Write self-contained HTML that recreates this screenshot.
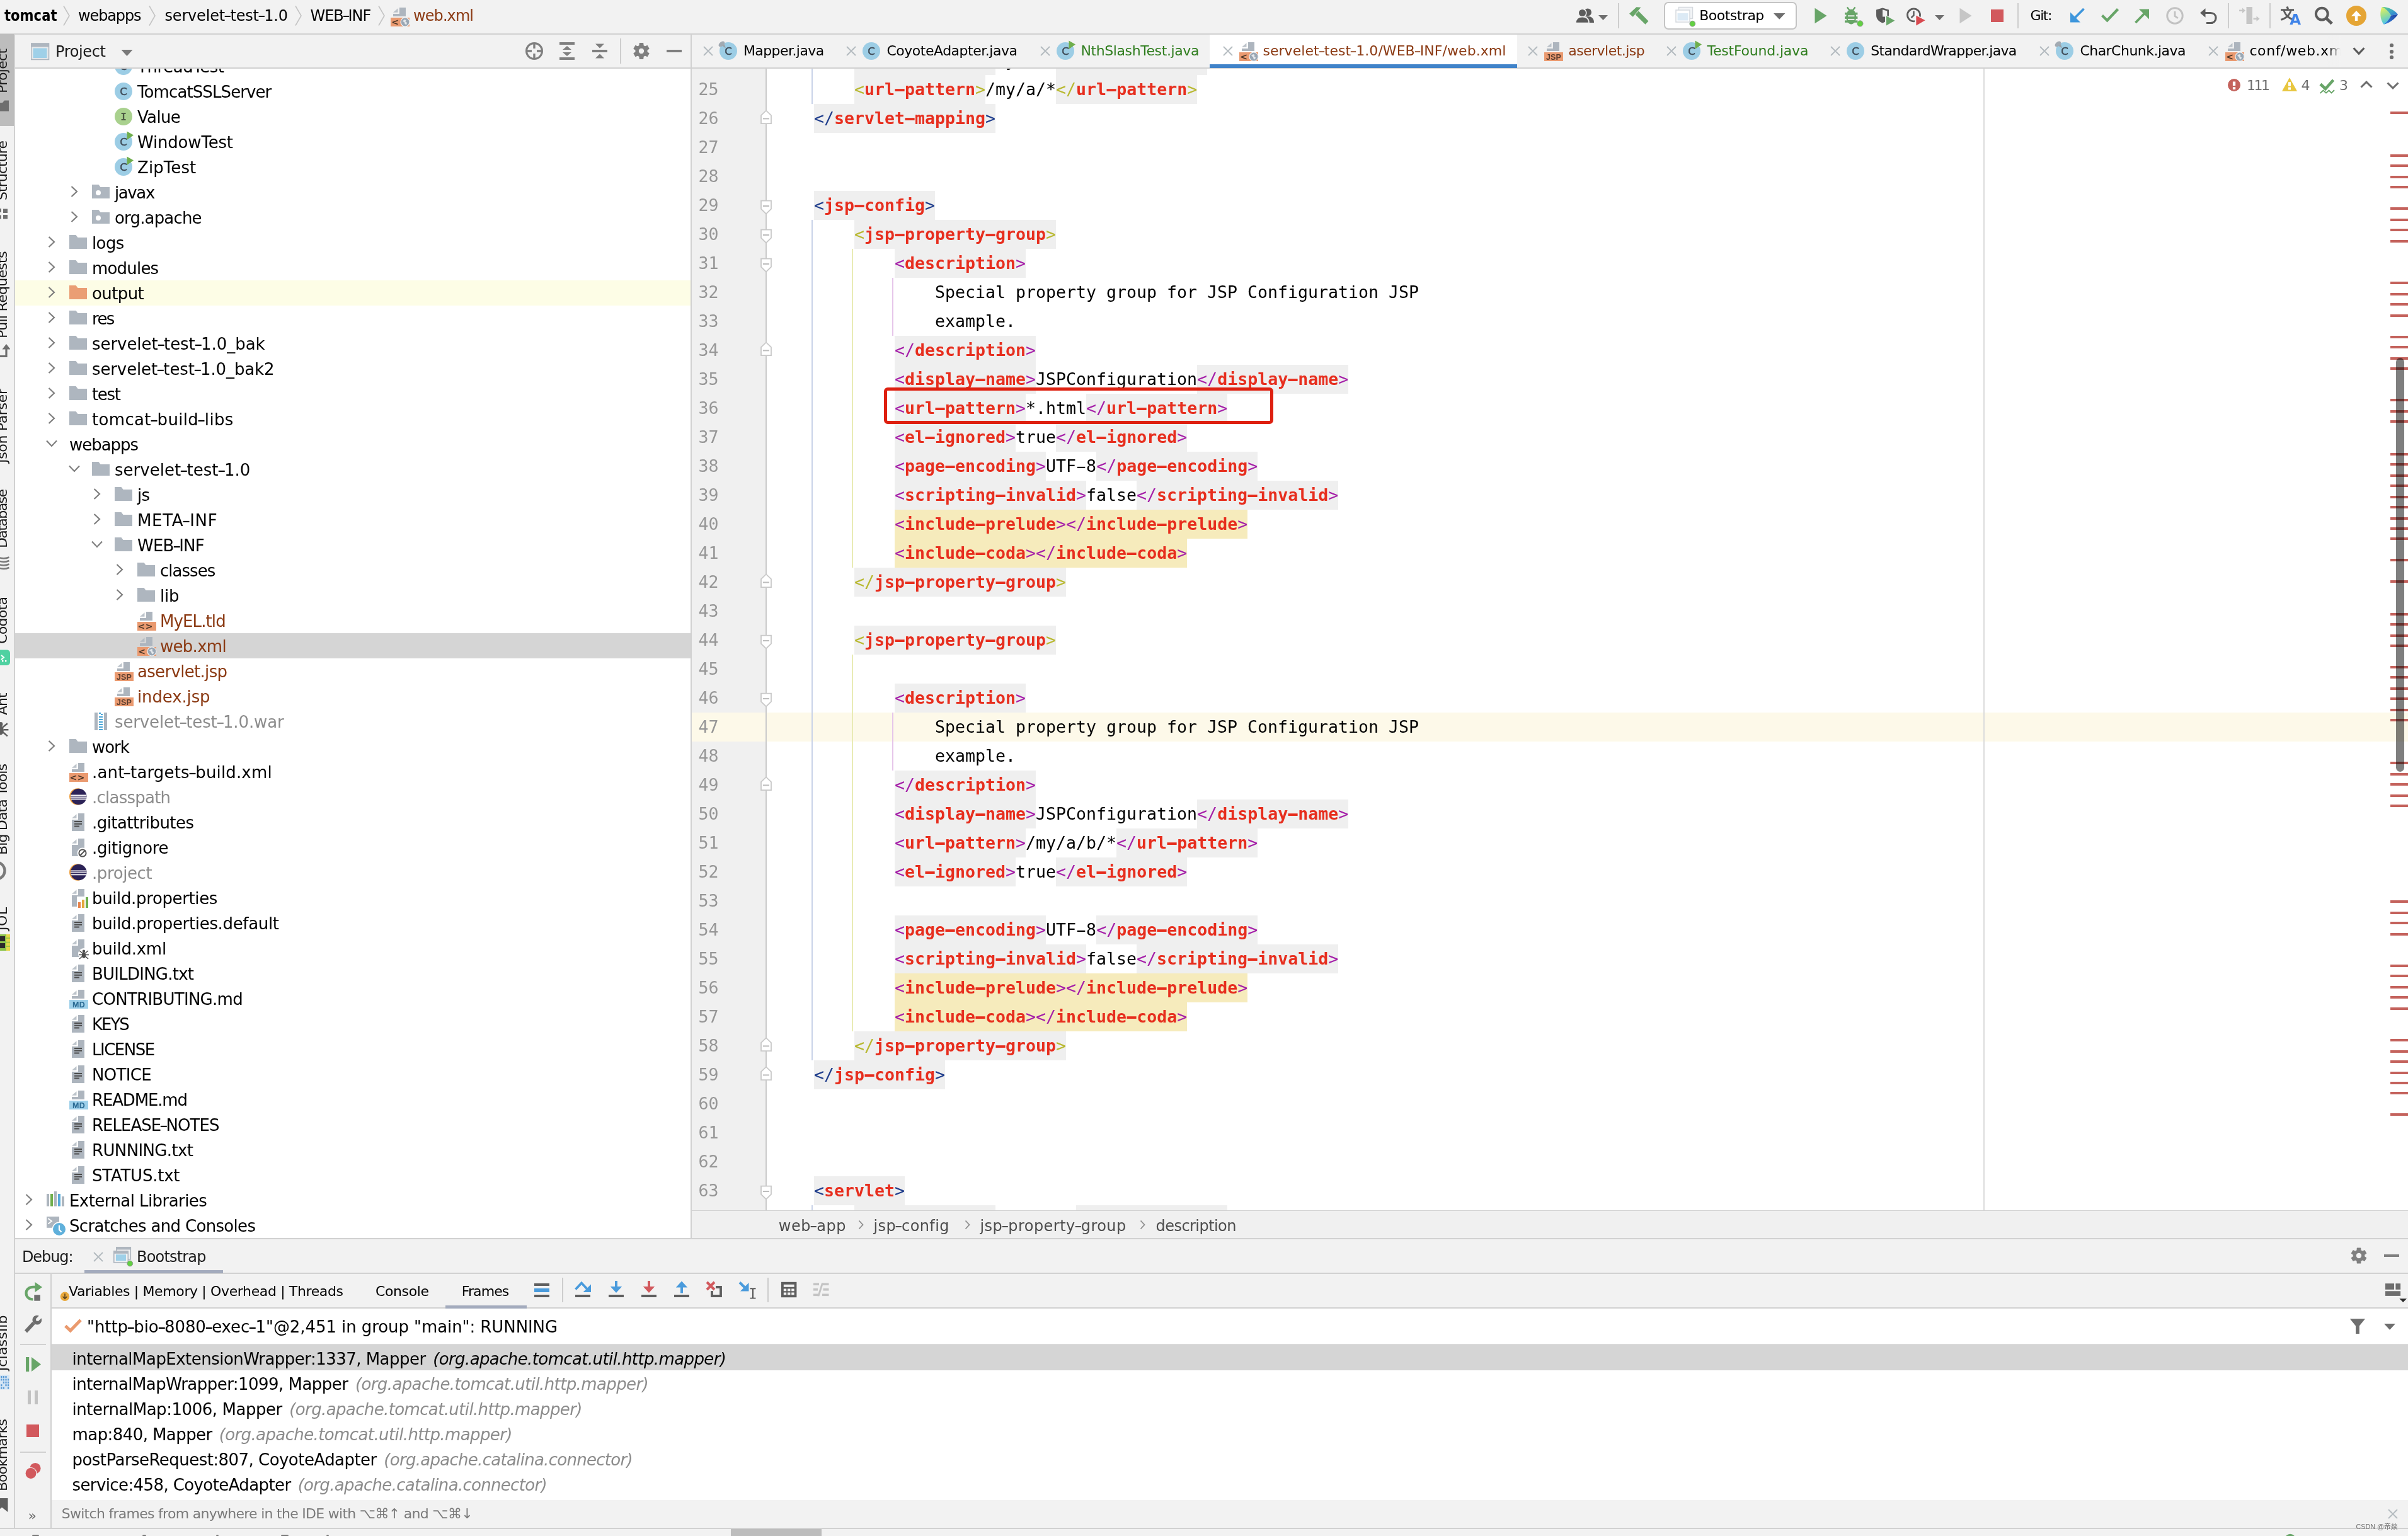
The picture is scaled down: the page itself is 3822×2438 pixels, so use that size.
<!DOCTYPE html>
<html><head><meta charset="utf-8"><title>tomcat – web.xml</title>
<style>
html,body{margin:0;padding:0;}
body{width:3822px;height:2438px;position:relative;overflow:hidden;background:#f2f2f2;}
#r{position:absolute;left:0;top:0;width:3822px;height:2438px;overflow:hidden;will-change:transform;}
#r div,#r svg,#r span.a{position:absolute;}
#r div{white-space:pre;}
.u{font-family:"DejaVu Sans","Liberation Sans",sans-serif;}
.m{font-family:"DejaVu Sans Mono","Liberation Mono",monospace;}
.cl{height:46px;line-height:46px;font-size:26.58px;color:#000;}
.cl span.cg,.cl span.ct{display:inline-block;height:46px;vertical-align:top;}
.cl b{color:#e72e1e;}
.u i{display:inline-block;font-style:normal;transform:scaleX(1.45);}
.cl i.h{display:inline-block;font-style:normal;transform:scaleX(1.85);}
</style></head><body><div id="r">
<div style="left:0px;top:0px;width:3822px;height:53px;background:#f2f2f2;"></div>
<div style="left:0px;top:53px;width:3822px;height:2px;background:#d1d1d1;"></div>
<div style="left:0px;top:55px;width:22px;height:2371px;background:#f2f2f2;"></div>
<div style="left:0px;top:54px;width:22px;height:146px;background:#bdbdbd;"></div>
<div style="left:22px;top:55px;width:2px;height:2371px;background:#d1d1d1;"></div>
<div style="left:24px;top:55px;width:1072px;height:53px;background:#f2f2f2;"></div>
<div style="left:24px;top:107px;width:1072px;height:2px;background:#d1d1d1;"></div>
<div style="left:24px;top:109px;width:1072px;height:1856px;background:#fff;"></div>
<div style="left:1096px;top:55px;width:2px;height:1911px;background:#d1d1d1;"></div>
<div style="left:1098px;top:55px;width:2724px;height:52px;background:#f2f2f2;"></div>
<div style="left:1098px;top:107px;width:2724px;height:2px;background:#d1d1d1;"></div>
<div style="left:1098px;top:109px;width:2724px;height:1812px;background:#fff;"></div>
<div style="left:1098px;top:1921px;width:2724px;height:1px;background:#d1d1d1;"></div>
<div style="left:1098px;top:1922px;width:2724px;height:43px;background:#f0f0f0;"></div>
<div style="left:24px;top:1965px;width:3798px;height:2px;background:#d1d1d1;"></div>
<div style="left:24px;top:1967px;width:3798px;height:53px;background:#f2f2f2;"></div>
<div style="left:24px;top:2020px;width:3798px;height:2px;background:#d1d1d1;"></div>
<div style="left:24px;top:2022px;width:3798px;height:53px;background:#f2f2f2;"></div>
<div style="left:82px;top:2075px;width:3740px;height:2px;background:#d1d1d1;"></div>
<div style="left:82px;top:2077px;width:3740px;height:304px;background:#fff;"></div>
<div style="left:80px;top:2022px;width:2px;height:403px;background:#d1d1d1;"></div>
<div style="left:24px;top:2075px;width:56px;height:350px;background:#f2f2f2;"></div>
<div style="left:82px;top:2381px;width:3740px;height:44px;background:#f2f2f2;"></div>
<div style="left:0px;top:2425px;width:3822px;height:2px;background:#d1d1d1;"></div>
<div style="left:0px;top:2427px;width:3822px;height:11px;background:#f2f2f2;"></div>
<div style="left:24px;top:109px;width:1072px;height:1856px;overflow:hidden">
<svg style="left:158px;top:-24px;" width="32" height="40" viewBox="0 0 32 40"><circle cx="14" cy="20" r="14" fill="#9ccde5"/><text x="14" y="25.6" text-anchor="middle" font-family="DejaVu Sans,Liberation Sans,sans-serif" font-size="16.5" fill="#3f4b57" stroke="#3f4b57" stroke-width=".5">C</text><path d="M19.5 3.5L30 9.5L19.5 17Z" fill="#6fae4c" stroke="#fff" stroke-width="0"/></svg>
<div class="u" style="left:194px;top:-23.40px;height:40px;line-height:40px;font-size:26px;color:#000;letter-spacing:-0.450px;">ThreadTest</div>
<svg style="left:158px;top:16px;" width="32" height="40" viewBox="0 0 32 40"><circle cx="14" cy="20" r="14" fill="#9ccde5"/><text x="14" y="25.6" text-anchor="middle" font-family="DejaVu Sans,Liberation Sans,sans-serif" font-size="16.5" fill="#3f4b57" stroke="#3f4b57" stroke-width=".5">C</text></svg>
<div class="u" style="left:194px;top:16.60px;height:40px;line-height:40px;font-size:26px;color:#000;letter-spacing:-0.898px;">TomcatSSLServer</div>
<svg style="left:158px;top:56px;" width="32" height="40" viewBox="0 0 32 40"><circle cx="14" cy="20" r="14" fill="#a9d18e"/><text x="14" y="25.8" text-anchor="middle" font-family="DejaVu Sans Mono,Liberation Mono,monospace" font-size="16" font-weight="bold" fill="#4c5a44">I</text></svg>
<div class="u" style="left:194px;top:56.60px;height:40px;line-height:40px;font-size:26px;color:#000;letter-spacing:-0.659px;">Value</div>
<svg style="left:158px;top:96px;" width="32" height="40" viewBox="0 0 32 40"><circle cx="14" cy="20" r="14" fill="#9ccde5"/><text x="14" y="25.6" text-anchor="middle" font-family="DejaVu Sans,Liberation Sans,sans-serif" font-size="16.5" fill="#3f4b57" stroke="#3f4b57" stroke-width=".5">C</text><path d="M19.5 3.5L30 9.5L19.5 17Z" fill="#6fae4c" stroke="#fff" stroke-width="0"/></svg>
<div class="u" style="left:194px;top:96.60px;height:40px;line-height:40px;font-size:26px;color:#000;letter-spacing:-0.189px;">WindowTest</div>
<svg style="left:158px;top:136px;" width="32" height="40" viewBox="0 0 32 40"><circle cx="14" cy="20" r="14" fill="#9ccde5"/><text x="14" y="25.6" text-anchor="middle" font-family="DejaVu Sans,Liberation Sans,sans-serif" font-size="16.5" fill="#3f4b57" stroke="#3f4b57" stroke-width=".5">C</text><path d="M19.5 3.5L30 9.5L19.5 17Z" fill="#6fae4c" stroke="#fff" stroke-width="0"/></svg>
<div class="u" style="left:194px;top:136.60px;height:40px;line-height:40px;font-size:26px;color:#000;letter-spacing:0.078px;">ZipTest</div>
<svg style="left:82.3px;top:183px;" width="24" height="24" viewBox="0 0 24 24"><path transform="translate(12 12) scale(1.0)" d="M-4.5 -8L4 0L-4.5 8" fill="none" stroke="#7f7f7f" stroke-width="2.2"/></svg>
<svg style="left:122px;top:176px;" width="28" height="40" viewBox="0 0 28 40"><path d="M0 8H10.5L13.5 12H28V30H0Z" fill="#aeb6bf"/><circle cx="10" cy="21" r="4" fill="#fff"/></svg>
<div class="u" style="left:158px;top:176.60px;height:40px;line-height:40px;font-size:26px;color:#000;letter-spacing:-1.398px;">javax</div>
<svg style="left:82.3px;top:223px;" width="24" height="24" viewBox="0 0 24 24"><path transform="translate(12 12) scale(1.0)" d="M-4.5 -8L4 0L-4.5 8" fill="none" stroke="#7f7f7f" stroke-width="2.2"/></svg>
<svg style="left:122px;top:216px;" width="28" height="40" viewBox="0 0 28 40"><path d="M0 8H10.5L13.5 12H28V30H0Z" fill="#aeb6bf"/><circle cx="10" cy="21" r="4" fill="#fff"/></svg>
<div class="u" style="left:158px;top:216.60px;height:40px;line-height:40px;font-size:26px;color:#000;letter-spacing:-0.836px;">org.apache</div>
<svg style="left:46.3px;top:263px;" width="24" height="24" viewBox="0 0 24 24"><path transform="translate(12 12) scale(1.0)" d="M-4.5 -8L4 0L-4.5 8" fill="none" stroke="#7f7f7f" stroke-width="2.2"/></svg>
<svg style="left:86px;top:256px;" width="28" height="40" viewBox="0 0 28 40"><path d="M0 8H10.5L13.5 12H28V30H0Z" fill="#aeb6bf"/></svg>
<div class="u" style="left:122px;top:256.60px;height:40px;line-height:40px;font-size:26px;color:#000;letter-spacing:-0.615px;">logs</div>
<svg style="left:46.3px;top:303px;" width="24" height="24" viewBox="0 0 24 24"><path transform="translate(12 12) scale(1.0)" d="M-4.5 -8L4 0L-4.5 8" fill="none" stroke="#7f7f7f" stroke-width="2.2"/></svg>
<svg style="left:86px;top:296px;" width="28" height="40" viewBox="0 0 28 40"><path d="M0 8H10.5L13.5 12H28V30H0Z" fill="#aeb6bf"/></svg>
<div class="u" style="left:122px;top:296.60px;height:40px;line-height:40px;font-size:26px;color:#000;letter-spacing:-0.807px;">modules</div>
<div style="left:0px;top:336px;width:1072px;height:40px;background:#fdfde6;"></div>
<svg style="left:46.3px;top:343px;" width="24" height="24" viewBox="0 0 24 24"><path transform="translate(12 12) scale(1.0)" d="M-4.5 -8L4 0L-4.5 8" fill="none" stroke="#7f7f7f" stroke-width="2.2"/></svg>
<svg style="left:86px;top:336px;" width="28" height="40" viewBox="0 0 28 40"><path d="M0 8H10.5L13.5 12H28V30H0Z" fill="#ea9e74"/></svg>
<div class="u" style="left:122px;top:336.60px;height:40px;line-height:40px;font-size:26px;color:#000;letter-spacing:-0.605px;">output</div>
<svg style="left:46.3px;top:383px;" width="24" height="24" viewBox="0 0 24 24"><path transform="translate(12 12) scale(1.0)" d="M-4.5 -8L4 0L-4.5 8" fill="none" stroke="#7f7f7f" stroke-width="2.2"/></svg>
<svg style="left:86px;top:376px;" width="28" height="40" viewBox="0 0 28 40"><path d="M0 8H10.5L13.5 12H28V30H0Z" fill="#aeb6bf"/></svg>
<div class="u" style="left:122px;top:376.60px;height:40px;line-height:40px;font-size:26px;color:#000;letter-spacing:-1.639px;">res</div>
<svg style="left:46.3px;top:423px;" width="24" height="24" viewBox="0 0 24 24"><path transform="translate(12 12) scale(1.0)" d="M-4.5 -8L4 0L-4.5 8" fill="none" stroke="#7f7f7f" stroke-width="2.2"/></svg>
<svg style="left:86px;top:416px;" width="28" height="40" viewBox="0 0 28 40"><path d="M0 8H10.5L13.5 12H28V30H0Z" fill="#aeb6bf"/></svg>
<div class="u" style="left:122px;top:416.60px;height:40px;line-height:40px;font-size:26px;color:#000;letter-spacing:-0.049px;">servelet<i>-</i>test<i>-</i>1.0_bak</div>
<svg style="left:46.3px;top:463px;" width="24" height="24" viewBox="0 0 24 24"><path transform="translate(12 12) scale(1.0)" d="M-4.5 -8L4 0L-4.5 8" fill="none" stroke="#7f7f7f" stroke-width="2.2"/></svg>
<svg style="left:86px;top:456px;" width="28" height="40" viewBox="0 0 28 40"><path d="M0 8H10.5L13.5 12H28V30H0Z" fill="#aeb6bf"/></svg>
<div class="u" style="left:122px;top:456.60px;height:40px;line-height:40px;font-size:26px;color:#000;letter-spacing:-0.123px;">servelet<i>-</i>test<i>-</i>1.0_bak2</div>
<svg style="left:46.3px;top:503px;" width="24" height="24" viewBox="0 0 24 24"><path transform="translate(12 12) scale(1.0)" d="M-4.5 -8L4 0L-4.5 8" fill="none" stroke="#7f7f7f" stroke-width="2.2"/></svg>
<svg style="left:86px;top:496px;" width="28" height="40" viewBox="0 0 28 40"><path d="M0 8H10.5L13.5 12H28V30H0Z" fill="#aeb6bf"/></svg>
<div class="u" style="left:122px;top:496.60px;height:40px;line-height:40px;font-size:26px;color:#000;letter-spacing:-1.358px;">test</div>
<svg style="left:46.3px;top:543px;" width="24" height="24" viewBox="0 0 24 24"><path transform="translate(12 12) scale(1.0)" d="M-4.5 -8L4 0L-4.5 8" fill="none" stroke="#7f7f7f" stroke-width="2.2"/></svg>
<svg style="left:86px;top:536px;" width="28" height="40" viewBox="0 0 28 40"><path d="M0 8H10.5L13.5 12H28V30H0Z" fill="#aeb6bf"/></svg>
<div class="u" style="left:122px;top:536.60px;height:40px;line-height:40px;font-size:26px;color:#000;letter-spacing:0.328px;">tomcat<i>-</i>build<i>-</i>libs</div>
<svg style="left:46.3px;top:583px;" width="24" height="24" viewBox="0 0 24 24"><path transform="translate(12 12) scale(1.0)" d="M-8 -4.5L0 4L8 -4.5" fill="none" stroke="#7f7f7f" stroke-width="2.2"/></svg>
<div class="u" style="left:86px;top:576.60px;height:40px;line-height:40px;font-size:26px;color:#000;letter-spacing:-1.020px;">webapps</div>
<svg style="left:82.3px;top:623px;" width="24" height="24" viewBox="0 0 24 24"><path transform="translate(12 12) scale(1.0)" d="M-8 -4.5L0 4L8 -4.5" fill="none" stroke="#7f7f7f" stroke-width="2.2"/></svg>
<svg style="left:122px;top:616px;" width="28" height="40" viewBox="0 0 28 40"><path d="M0 8H10.5L13.5 12H28V30H0Z" fill="#aeb6bf"/></svg>
<div class="u" style="left:158px;top:616.60px;height:40px;line-height:40px;font-size:26px;color:#000;letter-spacing:0.014px;">servelet<i>-</i>test<i>-</i>1.0</div>
<svg style="left:118.30000000000001px;top:663px;" width="24" height="24" viewBox="0 0 24 24"><path transform="translate(12 12) scale(1.0)" d="M-4.5 -8L4 0L-4.5 8" fill="none" stroke="#7f7f7f" stroke-width="2.2"/></svg>
<svg style="left:158px;top:656px;" width="28" height="40" viewBox="0 0 28 40"><path d="M0 8H10.5L13.5 12H28V30H0Z" fill="#aeb6bf"/></svg>
<div class="u" style="left:194px;top:656.60px;height:40px;line-height:40px;font-size:26px;color:#000;letter-spacing:-0.832px;">js</div>
<svg style="left:118.30000000000001px;top:703px;" width="24" height="24" viewBox="0 0 24 24"><path transform="translate(12 12) scale(1.0)" d="M-4.5 -8L4 0L-4.5 8" fill="none" stroke="#7f7f7f" stroke-width="2.2"/></svg>
<svg style="left:158px;top:696px;" width="28" height="40" viewBox="0 0 28 40"><path d="M0 8H10.5L13.5 12H28V30H0Z" fill="#aeb6bf"/></svg>
<div class="u" style="left:194px;top:696.60px;height:40px;line-height:40px;font-size:26px;color:#000;letter-spacing:0.672px;">META<i>-</i>INF</div>
<svg style="left:118.30000000000001px;top:743px;" width="24" height="24" viewBox="0 0 24 24"><path transform="translate(12 12) scale(1.0)" d="M-8 -4.5L0 4L8 -4.5" fill="none" stroke="#7f7f7f" stroke-width="2.2"/></svg>
<svg style="left:158px;top:736px;" width="28" height="40" viewBox="0 0 28 40"><path d="M0 8H10.5L13.5 12H28V30H0Z" fill="#aeb6bf"/></svg>
<div class="u" style="left:194px;top:736.60px;height:40px;line-height:40px;font-size:26px;color:#000;letter-spacing:-0.797px;">WEB<i>-</i>INF</div>
<svg style="left:154.3px;top:783px;" width="24" height="24" viewBox="0 0 24 24"><path transform="translate(12 12) scale(1.0)" d="M-4.5 -8L4 0L-4.5 8" fill="none" stroke="#7f7f7f" stroke-width="2.2"/></svg>
<svg style="left:194px;top:776px;" width="28" height="40" viewBox="0 0 28 40"><path d="M0 8H10.5L13.5 12H28V30H0Z" fill="#aeb6bf"/></svg>
<div class="u" style="left:230px;top:776.60px;height:40px;line-height:40px;font-size:26px;color:#000;letter-spacing:-0.982px;">classes</div>
<svg style="left:154.3px;top:823px;" width="24" height="24" viewBox="0 0 24 24"><path transform="translate(12 12) scale(1.0)" d="M-4.5 -8L4 0L-4.5 8" fill="none" stroke="#7f7f7f" stroke-width="2.2"/></svg>
<svg style="left:194px;top:816px;" width="28" height="40" viewBox="0 0 28 40"><path d="M0 8H10.5L13.5 12H28V30H0Z" fill="#aeb6bf"/></svg>
<div class="u" style="left:230px;top:816.60px;height:40px;line-height:40px;font-size:26px;color:#000;letter-spacing:-0.270px;">lib</div>
<svg style="left:194px;top:856px;" width="32" height="40" viewBox="0 0 32 40"><path d="M4 13.7L11.5 7.3V13.7Z" fill="#adb5be" opacity=".8"/><path d="M13.9 6H24V20H4V16H13.9Z" fill="#adb5be"/><rect x="0" y="22" width="30" height="14" fill="#ea9a70"/><text x="12.8" y="33.8" text-anchor="middle" font-family="DejaVu Sans,Liberation Sans,sans-serif" font-size="14" font-weight="bold" letter-spacing="0.6" fill="#4a3526">&lt;&gt;</text></svg>
<div class="u" style="left:230px;top:856.60px;height:40px;line-height:40px;font-size:26px;color:#8b3a13;letter-spacing:-0.894px;">MyEL.tld</div>
<div style="left:0px;top:896px;width:1072px;height:40px;background:#d5d5d5;"></div>
<svg style="left:194px;top:896px;" width="32" height="40" viewBox="0 0 32 40"><path d="M4 13.7L11.5 7.3V13.7Z" fill="#adb5be" opacity=".8"/><path d="M13.9 6H24V20H4V16H13.9Z" fill="#adb5be"/><rect x="0" y="22" width="30" height="14" fill="#ea9a70"/><text x="7" y="33.8" text-anchor="middle" font-family="DejaVu Sans,Liberation Sans,sans-serif" font-size="14" font-weight="bold" fill="#4a3526">&lt;</text><circle cx="23" cy="29" r="7.6" fill="#eef0f2"/><circle cx="23" cy="29" r="6.4" fill="#9aa7b4"/><path d="M19 27.5l3-2.5 2.5 1-1 2.5 2.5 1.5-1 3.5-2.5-1.5-.5-2.5z" fill="#e4e8ec"/></svg>
<div class="u" style="left:230px;top:896.60px;height:40px;line-height:40px;font-size:26px;color:#8b3a13;letter-spacing:-0.720px;">web.xml</div>
<svg style="left:158px;top:936px;" width="32" height="40" viewBox="0 0 32 40"><path d="M4 13.7L11.5 7.3V13.7Z" fill="#adb5be" opacity=".8"/><path d="M13.9 6H24V20H4V16H13.9Z" fill="#adb5be"/><rect x="0" y="22" width="30" height="14" fill="#ea9a70"/><text x="15" y="33.6" text-anchor="middle" font-family="Liberation Sans,DejaVu Sans,sans-serif" font-size="12.5" font-weight="bold" letter-spacing="0.2" fill="#5a3d2e">JSP</text></svg>
<div class="u" style="left:194px;top:936.60px;height:40px;line-height:40px;font-size:26px;color:#8b3a13;letter-spacing:-0.680px;">aservlet.jsp</div>
<svg style="left:158px;top:976px;" width="32" height="40" viewBox="0 0 32 40"><path d="M4 13.7L11.5 7.3V13.7Z" fill="#adb5be" opacity=".8"/><path d="M13.9 6H24V20H4V16H13.9Z" fill="#adb5be"/><rect x="0" y="22" width="30" height="14" fill="#ea9a70"/><text x="15" y="33.6" text-anchor="middle" font-family="Liberation Sans,DejaVu Sans,sans-serif" font-size="12.5" font-weight="bold" letter-spacing="0.2" fill="#5a3d2e">JSP</text></svg>
<div class="u" style="left:194px;top:976.60px;height:40px;line-height:40px;font-size:26px;color:#8b3a13;letter-spacing:-0.132px;">index.jsp</div>
<svg style="left:122px;top:1016px;" width="30" height="40" viewBox="0 0 30 40"><rect x="4" y="6" width="5" height="28" fill="#adb5be"/><rect x="19" y="6" width="5" height="28" fill="#adb5be"/><path d="M11 6h3v2h3v2h-3v2h3v2h-3v2h3v2h-3v2h3v2h-3v2h3v2h-3v2h3v2h-3v2h3v2h-6v-2h3v-2h-3v-2h3v-2h-3v-2h3v-2h-3v-2h3v-2h-3v-2h3v-2h-3v-2h3V8h-3z" fill="#49a6d8"/></svg>
<div class="u" style="left:158px;top:1016.60px;height:40px;line-height:40px;font-size:26px;color:#8c8c8c;letter-spacing:-0.131px;">servelet<i>-</i>test<i>-</i>1.0.war</div>
<svg style="left:46.3px;top:1063px;" width="24" height="24" viewBox="0 0 24 24"><path transform="translate(12 12) scale(1.0)" d="M-4.5 -8L4 0L-4.5 8" fill="none" stroke="#7f7f7f" stroke-width="2.2"/></svg>
<svg style="left:86px;top:1056px;" width="28" height="40" viewBox="0 0 28 40"><path d="M0 8H10.5L13.5 12H28V30H0Z" fill="#aeb6bf"/></svg>
<div class="u" style="left:122px;top:1056.60px;height:40px;line-height:40px;font-size:26px;color:#000;letter-spacing:-1.041px;">work</div>
<svg style="left:86px;top:1096px;" width="32" height="40" viewBox="0 0 32 40"><path d="M4 13.7L11.5 7.3V13.7Z" fill="#adb5be" opacity=".8"/><path d="M13.9 6H24V20H4V16H13.9Z" fill="#adb5be"/><rect x="0" y="22" width="30" height="14" fill="#ea9a70"/><text x="12.8" y="33.8" text-anchor="middle" font-family="DejaVu Sans,Liberation Sans,sans-serif" font-size="14" font-weight="bold" letter-spacing="0.6" fill="#4a3526">&lt;&gt;</text></svg>
<div class="u" style="left:122px;top:1096.60px;height:40px;line-height:40px;font-size:26px;color:#000;letter-spacing:0.152px;">.ant<i>-</i>targets<i>-</i>build.xml</div>
<svg style="left:86px;top:1136px;" width="30" height="40" viewBox="0 0 30 40"><circle cx="13.2" cy="19.5" r="13.2" fill="#f0a03c"/><circle cx="14.8" cy="19.5" r="12.8" fill="#2c2357"/><path d="M2.3 16.6h25v1.6h-25zM2 19.6h25.6v1.5H2zM2.6 22.6h24.4v1.6H2.6z" fill="#fff"/></svg>
<div class="u" style="left:122px;top:1136.60px;height:40px;line-height:40px;font-size:26px;color:#8c8c8c;letter-spacing:-0.760px;">.classpath</div>
<svg style="left:86px;top:1176px;" width="30" height="40" viewBox="0 0 30 40"><path d="M4 13.7L11.5 7.3V13.7Z" fill="#adb5be" opacity=".8"/><path d="M13.9 6H24V34H4V16H13.9Z" fill="#adb5be"/><path d="M8 18h12v2H8zM8 21.8h12v2H8zM8 25.6h8v2H8z" fill="#4d4d4d"/></svg>
<div class="u" style="left:122px;top:1176.60px;height:40px;line-height:40px;font-size:26px;color:#000;letter-spacing:-0.550px;">.gitattributes</div>
<svg style="left:86px;top:1216px;" width="32" height="40" viewBox="0 0 32 40"><path d="M4 13.7L11.5 7.3V13.7Z" fill="#adb5be" opacity=".8"/><path d="M13.9 6H24V34H4V16H13.9Z" fill="#adb5be"/><circle cx="21" cy="29" r="8.4" fill="#fff"/><circle cx="21" cy="29" r="5.6" fill="none" stroke="#555" stroke-width="2"/><path d="M17.2 32.8L24.8 25.2" stroke="#555" stroke-width="2"/></svg>
<div class="u" style="left:122px;top:1216.60px;height:40px;line-height:40px;font-size:26px;color:#000;letter-spacing:-0.311px;">.gitignore</div>
<svg style="left:86px;top:1256px;" width="30" height="40" viewBox="0 0 30 40"><circle cx="13.2" cy="19.5" r="13.2" fill="#f0a03c"/><circle cx="14.8" cy="19.5" r="12.8" fill="#2c2357"/><path d="M2.3 16.6h25v1.6h-25zM2 19.6h25.6v1.5H2zM2.6 22.6h24.4v1.6H2.6z" fill="#fff"/></svg>
<div class="u" style="left:122px;top:1256.60px;height:40px;line-height:40px;font-size:26px;color:#8c8c8c;letter-spacing:-0.401px;">.project</div>
<svg style="left:86px;top:1296px;" width="32" height="40" viewBox="0 0 32 40"><path d="M4 13.7L11.5 7.3V13.7Z" fill="#adb5be" opacity=".8"/><path d="M13.9 6H24V34H4V16H13.9Z" fill="#adb5be"/><rect x="12" y="18" width="20" height="18" fill="#fff"/><rect x="14" y="27" width="4" height="9" fill="#e8834a"/><rect x="20" y="23" width="4" height="13" fill="#e4a83c"/><rect x="26" y="19" width="4" height="17" fill="#6fae4c"/></svg>
<div class="u" style="left:122px;top:1296.60px;height:40px;line-height:40px;font-size:26px;color:#000;letter-spacing:-0.367px;">build.properties</div>
<svg style="left:86px;top:1336px;" width="30" height="40" viewBox="0 0 30 40"><path d="M4 13.7L11.5 7.3V13.7Z" fill="#adb5be" opacity=".8"/><path d="M13.9 6H24V34H4V16H13.9Z" fill="#adb5be"/><path d="M8 18h12v2H8zM8 21.8h12v2H8zM8 25.6h8v2H8z" fill="#4d4d4d"/></svg>
<div class="u" style="left:122px;top:1336.60px;height:40px;line-height:40px;font-size:26px;color:#000;letter-spacing:-0.330px;">build.properties.default</div>
<svg style="left:86px;top:1376px;" width="34" height="42" viewBox="0 0 34 42"><path d="M4 13.7L11.5 7.3V13.7Z" fill="#adb5be" opacity=".8"/><path d="M13.9 6H24V34H4V16H13.9Z" fill="#adb5be"/><circle cx="23" cy="29" r="9" fill="#fff"/><g transform="translate(23 29) scale(1.0)" fill="#4d4d4d" stroke="#4d4d4d"><ellipse cx="0" cy="-4.2" rx="2.2" ry="2.2" stroke="none"/><ellipse cx="0" cy="2.2" rx="3.1" ry="4.6" stroke="none"/><path d="M-2 -1L-7 -5M2 -1L7 -5M-3 1.5H-8M3 1.5H8M-2.5 4L-7 8M2.5 4L7 8" stroke-width="1.6" fill="none"/></g></svg>
<div class="u" style="left:122px;top:1376.60px;height:40px;line-height:40px;font-size:26px;color:#000;letter-spacing:-0.253px;">build.xml</div>
<svg style="left:86px;top:1416px;" width="30" height="40" viewBox="0 0 30 40"><path d="M4 13.7L11.5 7.3V13.7Z" fill="#adb5be" opacity=".8"/><path d="M13.9 6H24V34H4V16H13.9Z" fill="#adb5be"/><path d="M8 18h12v2H8zM8 21.8h12v2H8zM8 25.6h8v2H8z" fill="#4d4d4d"/></svg>
<div class="u" style="left:122px;top:1416.60px;height:40px;line-height:40px;font-size:26px;color:#000;letter-spacing:-0.762px;">BUILDING.txt</div>
<svg style="left:86px;top:1456px;" width="32" height="40" viewBox="0 0 32 40"><path d="M4 13.7L11.5 7.3V13.7Z" fill="#adb5be" opacity=".8"/><path d="M13.9 6H24V20H4V16H13.9Z" fill="#adb5be"/><rect x="0" y="22" width="30" height="14" fill="#9ed0ea"/><text x="15" y="33.6" text-anchor="middle" font-family="Liberation Sans,DejaVu Sans,sans-serif" font-size="12.5" font-weight="bold" letter-spacing="0.2" fill="#2a6a93">MD</text></svg>
<div class="u" style="left:122px;top:1456.60px;height:40px;line-height:40px;font-size:26px;color:#000;letter-spacing:-0.721px;">CONTRIBUTING.md</div>
<svg style="left:86px;top:1496px;" width="30" height="40" viewBox="0 0 30 40"><path d="M4 13.7L11.5 7.3V13.7Z" fill="#adb5be" opacity=".8"/><path d="M13.9 6H24V34H4V16H13.9Z" fill="#adb5be"/><path d="M8 18h12v2H8zM8 21.8h12v2H8zM8 25.6h8v2H8z" fill="#4d4d4d"/></svg>
<div class="u" style="left:122px;top:1496.60px;height:40px;line-height:40px;font-size:26px;color:#000;letter-spacing:-2.015px;">KEYS</div>
<svg style="left:86px;top:1536px;" width="30" height="40" viewBox="0 0 30 40"><path d="M4 13.7L11.5 7.3V13.7Z" fill="#adb5be" opacity=".8"/><path d="M13.9 6H24V34H4V16H13.9Z" fill="#adb5be"/><path d="M8 18h12v2H8zM8 21.8h12v2H8zM8 25.6h8v2H8z" fill="#4d4d4d"/></svg>
<div class="u" style="left:122px;top:1536.60px;height:40px;line-height:40px;font-size:26px;color:#000;letter-spacing:-1.491px;">LICENSE</div>
<svg style="left:86px;top:1576px;" width="30" height="40" viewBox="0 0 30 40"><path d="M4 13.7L11.5 7.3V13.7Z" fill="#adb5be" opacity=".8"/><path d="M13.9 6H24V34H4V16H13.9Z" fill="#adb5be"/><path d="M8 18h12v2H8zM8 21.8h12v2H8zM8 25.6h8v2H8z" fill="#4d4d4d"/></svg>
<div class="u" style="left:122px;top:1576.60px;height:40px;line-height:40px;font-size:26px;color:#000;letter-spacing:-0.673px;">NOTICE</div>
<svg style="left:86px;top:1616px;" width="32" height="40" viewBox="0 0 32 40"><path d="M4 13.7L11.5 7.3V13.7Z" fill="#adb5be" opacity=".8"/><path d="M13.9 6H24V20H4V16H13.9Z" fill="#adb5be"/><rect x="0" y="22" width="30" height="14" fill="#9ed0ea"/><text x="15" y="33.6" text-anchor="middle" font-family="Liberation Sans,DejaVu Sans,sans-serif" font-size="12.5" font-weight="bold" letter-spacing="0.2" fill="#2a6a93">MD</text></svg>
<div class="u" style="left:122px;top:1616.60px;height:40px;line-height:40px;font-size:26px;color:#000;letter-spacing:-1.155px;">README.md</div>
<svg style="left:86px;top:1656px;" width="30" height="40" viewBox="0 0 30 40"><path d="M4 13.7L11.5 7.3V13.7Z" fill="#adb5be" opacity=".8"/><path d="M13.9 6H24V34H4V16H13.9Z" fill="#adb5be"/><path d="M8 18h12v2H8zM8 21.8h12v2H8zM8 25.6h8v2H8z" fill="#4d4d4d"/></svg>
<div class="u" style="left:122px;top:1656.60px;height:40px;line-height:40px;font-size:26px;color:#000;letter-spacing:-0.989px;">RELEASE<i>-</i>NOTES</div>
<svg style="left:86px;top:1696px;" width="30" height="40" viewBox="0 0 30 40"><path d="M4 13.7L11.5 7.3V13.7Z" fill="#adb5be" opacity=".8"/><path d="M13.9 6H24V34H4V16H13.9Z" fill="#adb5be"/><path d="M8 18h12v2H8zM8 21.8h12v2H8zM8 25.6h8v2H8z" fill="#4d4d4d"/></svg>
<div class="u" style="left:122px;top:1696.60px;height:40px;line-height:40px;font-size:26px;color:#000;letter-spacing:-0.634px;">RUNNING.txt</div>
<svg style="left:86px;top:1736px;" width="30" height="40" viewBox="0 0 30 40"><path d="M4 13.7L11.5 7.3V13.7Z" fill="#adb5be" opacity=".8"/><path d="M13.9 6H24V34H4V16H13.9Z" fill="#adb5be"/><path d="M8 18h12v2H8zM8 21.8h12v2H8zM8 25.6h8v2H8z" fill="#4d4d4d"/></svg>
<div class="u" style="left:122px;top:1736.60px;height:40px;line-height:40px;font-size:26px;color:#000;letter-spacing:-0.226px;">STATUS.txt</div>
<svg style="left:10.3px;top:1783px;" width="24" height="24" viewBox="0 0 24 24"><path transform="translate(12 12) scale(1.0)" d="M-4.5 -8L4 0L-4.5 8" fill="none" stroke="#7f7f7f" stroke-width="2.2"/></svg>
<svg style="left:50px;top:1776px;" width="30" height="40" viewBox="0 0 30 40"><rect x="0" y="10" width="4" height="19.6" fill="#adb5be"/><rect x="6" y="10" width="4" height="19.6" fill="#6fae4c"/><rect x="12" y="6" width="4" height="23.6" fill="#adb5be"/><rect x="18" y="10" width="4" height="19.6" fill="#57abd9"/><rect x="24" y="14" width="4" height="15.6" fill="#adb5be"/></svg>
<div class="u" style="left:86px;top:1776.60px;height:40px;line-height:40px;font-size:26px;color:#000;letter-spacing:-0.568px;">External Libraries</div>
<svg style="left:10.3px;top:1823px;" width="24" height="24" viewBox="0 0 24 24"><path transform="translate(12 12) scale(1.0)" d="M-4.5 -8L4 0L-4.5 8" fill="none" stroke="#7f7f7f" stroke-width="2.2"/></svg>
<svg style="left:50px;top:1816px;" width="34" height="40" viewBox="0 0 34 40"><path d="M0 6H20V23.8H0Z" fill="#adb5be"/><path d="M2.3 9L8 13.3L2.3 17.6" stroke="#fff" stroke-width="1.8" fill="none"/><circle cx="20" cy="26" r="11.4" fill="#fff"/><circle cx="20" cy="26" r="10" fill="#5fb0db"/><path d="M20 20V27L23.5 30.5" stroke="#fff" stroke-width="2.2" fill="none"/></svg>
<div class="u" style="left:86px;top:1816.60px;height:40px;line-height:40px;font-size:26px;color:#000;letter-spacing:-0.674px;">Scratches and Consoles</div>
</div>
<div class="u" style="left:6.6px;top:5.20px;height:40px;line-height:40px;font-size:24px;color:#000;font-weight:bold;transform-origin:0 50%;transform:scaleX(0.8801);">tomcat</div>
<svg style="left:100px;top:8px;" width="12" height="34" viewBox="0 0 12 34"><path d="M1 1.5L10 17L1 32.5" fill="none" stroke="#c4c4c4" stroke-width="1.6"/></svg>
<div class="u" style="left:124px;top:5.20px;height:40px;line-height:40px;font-size:24px;color:#000;letter-spacing:-1.133px;">webapps</div>
<svg style="left:236px;top:8px;" width="12" height="34" viewBox="0 0 12 34"><path d="M1 1.5L10 17L1 32.5" fill="none" stroke="#c4c4c4" stroke-width="1.6"/></svg>
<div class="u" style="left:261.5px;top:5.20px;height:40px;line-height:40px;font-size:24px;color:#000;letter-spacing:-0.188px;">servelet<i>-</i>test<i>-</i>1.0</div>
<svg style="left:468px;top:8px;" width="12" height="34" viewBox="0 0 12 34"><path d="M1 1.5L10 17L1 32.5" fill="none" stroke="#c4c4c4" stroke-width="1.6"/></svg>
<div class="u" style="left:492.4px;top:5.20px;height:40px;line-height:40px;font-size:24px;color:#000;letter-spacing:-0.979px;">WEB<i>-</i>INF</div>
<svg style="left:600px;top:8px;" width="12" height="34" viewBox="0 0 12 34"><path d="M1 1.5L10 17L1 32.5" fill="none" stroke="#c4c4c4" stroke-width="1.6"/></svg>
<svg style="left:620px;top:5.5px;" width="32" height="40" viewBox="0 0 32 40"><path d="M4 13.7L11.5 7.3V13.7Z" fill="#adb5be" opacity=".8"/><path d="M13.9 6H24V20H4V16H13.9Z" fill="#adb5be"/><rect x="0" y="22" width="30" height="14" fill="#ea9a70"/><text x="7" y="33.8" text-anchor="middle" font-family="DejaVu Sans,Liberation Sans,sans-serif" font-size="14" font-weight="bold" fill="#4a3526">&lt;</text><circle cx="23" cy="29" r="7.6" fill="#eef0f2"/><circle cx="23" cy="29" r="6.4" fill="#9aa7b4"/><path d="M19 27.5l3-2.5 2.5 1-1 2.5 2.5 1.5-1 3.5-2.5-1.5-.5-2.5z" fill="#e4e8ec"/></svg>
<div class="u" style="left:656px;top:5.20px;height:40px;line-height:40px;font-size:24px;color:#8b3a13;letter-spacing:-0.917px;">web.xml</div>
<svg style="left:49px;top:68px;" width="30" height="28" viewBox="0 0 30 28"><rect x="0.5" y="1" width="28" height="25.5" fill="#e8eaec" stroke="#aeb6bf" stroke-width="1.6"/><rect x="0" y="0.5" width="29" height="6" fill="#aeb6bf"/><rect x="3.5" y="8.5" width="22" height="15.5" fill="#9fd0e8"/></svg>
<div class="u" style="left:88px;top:62.30px;height:40px;line-height:40px;font-size:24px;color:#1a1a1a;letter-spacing:-0.354px;">Project</div>
<svg style="left:192px;top:78px;" width="20" height="12" viewBox="0 0 20 12"><path d="M0.5 1H18.5L9.5 11Z" fill="#7a7a7a"/></svg>
<svg style="left:832px;top:65px;" width="32" height="32" viewBox="0 0 32 32"><circle cx="16" cy="16" r="12.4" fill="none" stroke="#7f7f7f" stroke-width="3.2"/><path d="M16 4v8M16 20v8M4 16h8M20 16h8" stroke="#7f7f7f" stroke-width="3.4"/></svg>
<svg style="left:888px;top:66px;" width="24" height="30" viewBox="0 0 24 30"><path d="M0 1h24v4H0zM0 25h24v4H0zM12 7l7 6H5zM12 23l7-6H5z" fill="#7f7f7f"/></svg>
<svg style="left:940px;top:66px;" width="24" height="30" viewBox="0 0 24 30"><path d="M0 13h24v4H0zM12 10.5l7-7H5zM12 19.5l7 7H5z" fill="#7f7f7f"/></svg>
<div style="left:984px;top:61px;width:2px;height:40px;background:#cdcdcd;"></div>
<svg style="left:1002px;top:65px;" width="32" height="32" viewBox="0 0 32 32"><path d="M12.97 7.45L13.28 3.70L18.72 3.70L19.03 7.45L21.89 9.10L25.29 7.49L28.02 12.21L24.92 14.35L24.92 17.65L28.02 19.79L25.29 24.51L21.89 22.90L19.03 24.55L18.72 28.30L13.28 28.30L12.97 24.55L10.11 22.90L6.71 24.51L3.98 19.79L7.08 17.65L7.08 14.35L3.98 12.21L6.71 7.49L10.11 9.10ZM20.8 16A4.8 4.8 0 1 0 11.2 16A4.8 4.8 0 1 0 20.8 16Z" fill="#7f7f7f" fill-rule="evenodd" stroke="#7f7f7f" stroke-width="1.2" stroke-linejoin="round"/></svg>
<div style="left:1058px;top:79px;width:24px;height:4px;background:#7f7f7f;"></div>
<div style="left:1920px;top:55px;width:488px;height:52px;background:#fff;"></div>
<div style="left:1920px;top:102px;width:488px;height:6px;background:#4083c9;"></div>
<svg style="left:1113.5px;top:71px;" width="20" height="20" viewBox="0 0 20 20"><path d="M3 3L17 17M17 3L3 17" stroke="#b3babf" stroke-width="1.8" fill="none"/></svg>
<svg style="left:1141.5px;top:61px;" width="32" height="40" viewBox="0 0 32 40"><circle cx="14" cy="20" r="14" fill="#9ccde5"/><text x="14" y="25.6" text-anchor="middle" font-family="DejaVu Sans,Liberation Sans,sans-serif" font-size="16.5" fill="#3f4b57" stroke="#3f4b57" stroke-width=".5">C</text></svg>
<svg style="left:1137.5px;top:61px;" width="22" height="22" viewBox="0 0 22 22"><path d="M8 11.5L14 15.8L11.8 9Z" fill="#9aa3ab"/><ellipse cx="7.4" cy="8.9" rx="5.6" ry="3.4" transform="rotate(-38 7.4 8.9)" fill="#a2aab2"/></svg>
<div class="u" style="left:1179.9px;top:61.30px;height:40px;line-height:40px;font-size:22px;color:#000;letter-spacing:-0.566px;">Mapper.java</div>
<svg style="left:1341px;top:71px;" width="20" height="20" viewBox="0 0 20 20"><path d="M3 3L17 17M17 3L3 17" stroke="#b3babf" stroke-width="1.8" fill="none"/></svg>
<svg style="left:1369px;top:61px;" width="32" height="40" viewBox="0 0 32 40"><circle cx="14" cy="20" r="14" fill="#9ccde5"/><text x="14" y="25.6" text-anchor="middle" font-family="DejaVu Sans,Liberation Sans,sans-serif" font-size="16.5" fill="#3f4b57" stroke="#3f4b57" stroke-width=".5">C</text></svg>
<div class="u" style="left:1407.4px;top:61.30px;height:40px;line-height:40px;font-size:22px;color:#000;letter-spacing:-0.482px;">CoyoteAdapter.java</div>
<svg style="left:1649px;top:71px;" width="20" height="20" viewBox="0 0 20 20"><path d="M3 3L17 17M17 3L3 17" stroke="#b3babf" stroke-width="1.8" fill="none"/></svg>
<svg style="left:1677px;top:61px;" width="32" height="40" viewBox="0 0 32 40"><circle cx="14" cy="20" r="14" fill="#9ccde5"/><text x="14" y="25.6" text-anchor="middle" font-family="DejaVu Sans,Liberation Sans,sans-serif" font-size="16.5" fill="#3f4b57" stroke="#3f4b57" stroke-width=".5">C</text><path d="M19.5 3.5L30 9.5L19.5 17Z" fill="#6fae4c" stroke="#fff" stroke-width="0"/></svg>
<div class="u" style="left:1715.4px;top:61.30px;height:40px;line-height:40px;font-size:22px;color:#2f7d1e;letter-spacing:-0.400px;">NthSlashTest.java</div>
<svg style="left:1938.5px;top:71px;" width="20" height="20" viewBox="0 0 20 20"><path d="M3 3L17 17M17 3L3 17" stroke="#b3babf" stroke-width="1.8" fill="none"/></svg>
<svg style="left:1966.5px;top:61px;" width="32" height="40" viewBox="0 0 32 40"><path d="M4 13.7L11.5 7.3V13.7Z" fill="#adb5be" opacity=".8"/><path d="M13.9 6H24V20H4V16H13.9Z" fill="#adb5be"/><rect x="0" y="22" width="30" height="14" fill="#ea9a70"/><text x="7" y="33.8" text-anchor="middle" font-family="DejaVu Sans,Liberation Sans,sans-serif" font-size="14" font-weight="bold" fill="#4a3526">&lt;</text><circle cx="23" cy="29" r="7.6" fill="#eef0f2"/><circle cx="23" cy="29" r="6.4" fill="#9aa7b4"/><path d="M19 27.5l3-2.5 2.5 1-1 2.5 2.5 1.5-1 3.5-2.5-1.5-.5-2.5z" fill="#e4e8ec"/></svg>
<div class="u" style="left:2004.4px;top:61.30px;height:40px;line-height:40px;font-size:22px;color:#8b3a13;letter-spacing:0.058px;">servelet<i>-</i>test<i>-</i>1.0/WEB<i>-</i>INF/web.xml</div>
<svg style="left:2423.3px;top:71px;" width="20" height="20" viewBox="0 0 20 20"><path d="M3 3L17 17M17 3L3 17" stroke="#b3babf" stroke-width="1.8" fill="none"/></svg>
<svg style="left:2451.3px;top:61px;" width="32" height="40" viewBox="0 0 32 40"><path d="M4 13.7L11.5 7.3V13.7Z" fill="#adb5be" opacity=".8"/><path d="M13.9 6H24V20H4V16H13.9Z" fill="#adb5be"/><rect x="0" y="22" width="30" height="14" fill="#ea9a70"/><text x="15" y="33.6" text-anchor="middle" font-family="Liberation Sans,DejaVu Sans,sans-serif" font-size="12.5" font-weight="bold" letter-spacing="0.2" fill="#5a3d2e">JSP</text></svg>
<div class="u" style="left:2489.2000000000003px;top:61.30px;height:40px;line-height:40px;font-size:22px;color:#8b3a13;letter-spacing:-0.524px;">aservlet.jsp</div>
<svg style="left:2643px;top:71px;" width="20" height="20" viewBox="0 0 20 20"><path d="M3 3L17 17M17 3L3 17" stroke="#b3babf" stroke-width="1.8" fill="none"/></svg>
<svg style="left:2671px;top:61px;" width="32" height="40" viewBox="0 0 32 40"><circle cx="14" cy="20" r="14" fill="#9ccde5"/><text x="14" y="25.6" text-anchor="middle" font-family="DejaVu Sans,Liberation Sans,sans-serif" font-size="16.5" fill="#3f4b57" stroke="#3f4b57" stroke-width=".5">C</text><path d="M19.5 3.5L30 9.5L19.5 17Z" fill="#6fae4c" stroke="#fff" stroke-width="0"/></svg>
<div class="u" style="left:2709.4px;top:61.30px;height:40px;line-height:40px;font-size:22px;color:#2f7d1e;letter-spacing:-0.200px;">TestFound.java</div>
<svg style="left:2902.9px;top:71px;" width="20" height="20" viewBox="0 0 20 20"><path d="M3 3L17 17M17 3L3 17" stroke="#b3babf" stroke-width="1.8" fill="none"/></svg>
<svg style="left:2930.9px;top:61px;" width="32" height="40" viewBox="0 0 32 40"><circle cx="14" cy="20" r="14" fill="#9ccde5"/><text x="14" y="25.6" text-anchor="middle" font-family="DejaVu Sans,Liberation Sans,sans-serif" font-size="16.5" fill="#3f4b57" stroke="#3f4b57" stroke-width=".5">C</text></svg>
<div class="u" style="left:2969.3px;top:61.30px;height:40px;line-height:40px;font-size:22px;color:#000;letter-spacing:-0.683px;">StandardWrapper.java</div>
<svg style="left:3235px;top:71px;" width="20" height="20" viewBox="0 0 20 20"><path d="M3 3L17 17M17 3L3 17" stroke="#b3babf" stroke-width="1.8" fill="none"/></svg>
<svg style="left:3263px;top:61px;" width="32" height="40" viewBox="0 0 32 40"><circle cx="14" cy="20" r="14" fill="#9ccde5"/><text x="14" y="25.6" text-anchor="middle" font-family="DejaVu Sans,Liberation Sans,sans-serif" font-size="16.5" fill="#3f4b57" stroke="#3f4b57" stroke-width=".5">C</text></svg>
<svg style="left:3259px;top:61px;" width="22" height="22" viewBox="0 0 22 22"><path d="M8 11.5L14 15.8L11.8 9Z" fill="#9aa3ab"/><ellipse cx="7.4" cy="8.9" rx="5.6" ry="3.4" transform="rotate(-38 7.4 8.9)" fill="#a2aab2"/></svg>
<div class="u" style="left:3301.4px;top:61.30px;height:40px;line-height:40px;font-size:22px;color:#000;letter-spacing:-0.525px;">CharChunk.java</div>
<svg style="left:3503.4px;top:71px;" width="20" height="20" viewBox="0 0 20 20"><path d="M3 3L17 17M17 3L3 17" stroke="#b3babf" stroke-width="1.8" fill="none"/></svg>
<svg style="left:3531.9px;top:61px;" width="32" height="40" viewBox="0 0 32 40"><path d="M4 13.7L11.5 7.3V13.7Z" fill="#adb5be" opacity=".8"/><path d="M13.9 6H24V20H4V16H13.9Z" fill="#adb5be"/><rect x="0" y="22" width="30" height="14" fill="#ea9a70"/><text x="7" y="33.8" text-anchor="middle" font-family="DejaVu Sans,Liberation Sans,sans-serif" font-size="14" font-weight="bold" fill="#4a3526">&lt;</text><circle cx="23" cy="29" r="7.6" fill="#eef0f2"/><circle cx="23" cy="29" r="6.4" fill="#9aa7b4"/><path d="M19 27.5l3-2.5 2.5 1-1 2.5 2.5 1.5-1 3.5-2.5-1.5-.5-2.5z" fill="#e4e8ec"/></svg>
<div style="left:3570.4px;top:56px;width:146px;height:50px;overflow:hidden">
<div class="u" style="left:0px;top:5.30px;height:40px;line-height:40px;font-size:22px;color:#000;letter-spacing:0.618px;">conf/web.xml</div>
</div>
<div style="left:3694.4px;top:56px;width:22px;height:50px;background:linear-gradient(90deg,rgba(242,242,242,0),#f2f2f2 95%)"></div>
<svg style="left:3732px;top:69px;" width="24" height="24" viewBox="0 0 24 24"><path transform="translate(12 12) scale(1.05)" d="M-8 -4.5L0 4L8 -4.5" fill="none" stroke="#5a5a5a" stroke-width="3"/></svg>
<svg style="left:3790.5px;top:67.0px;" width="10" height="10" viewBox="0 0 10 10"><circle cx="5" cy="5" r="3.1" fill="#6e6e6e"/></svg>
<svg style="left:3790.5px;top:76.5px;" width="10" height="10" viewBox="0 0 10 10"><circle cx="5" cy="5" r="3.1" fill="#6e6e6e"/></svg>
<svg style="left:3790.5px;top:86.0px;" width="10" height="10" viewBox="0 0 10 10"><circle cx="5" cy="5" r="3.1" fill="#6e6e6e"/></svg>
<div style="left:1098px;top:109px;width:2724px;height:1812px;overflow:hidden">
<div style="left:0px;top:0px;width:117px;height:1812px;background:#f0f0f0;"></div>
<div style="left:0px;top:1022px;width:2724px;height:46px;background:#fdf9e9;"></div>
<div style="left:0px;top:1022px;width:117px;height:46px;background:#fdf9e9;"></div>
<div style="left:2050px;top:0px;width:2px;height:1812px;background:#dcdcdc;"></div>
<div style="left:117px;top:0px;width:2px;height:1812px;background:#cbcbcb;"></div>
<div style="left:190px;top:-36px;width:2px;height:92px;background:#c9d3e8;"></div>
<div style="left:190px;top:240px;width:2px;height:1334px;background:#c9d3e8;"></div>
<div style="left:190px;top:1804px;width:2px;height:46px;background:#c9d3e8;"></div>
<div style="left:254px;top:286px;width:2px;height:506px;background:#e9ebb5;"></div>
<div style="left:254px;top:930px;width:2px;height:598px;background:#e9ebb5;"></div>
<div style="left:318px;top:332px;width:2px;height:92px;background:#e6c6ea;"></div>
<div style="left:318px;top:1022px;width:2px;height:92px;background:#e6c6ea;"></div>
<div class="m" style="left:9px;top:-36px;width:33.5px;height:46px;line-height:46px;font-size:26.58px;color:#979797;text-align:right">24</div>
<div class="m cl" style="left:258.0px;top:-36px;"><span class="cg" style="background:#efefef"><span style="color:#b8b82f">&lt;</span><b>servlet<i class="h">-</i>name</b><span style="color:#b8b82f">&gt;</span></span><span class="ct">MyTest</span><span class="cg" style="background:#efefef"><span style="color:#b8b82f">&lt;/</span><b>servlet<i class="h">-</i>name</b><span style="color:#b8b82f">&gt;</span></span></div>
<div class="m" style="left:9px;top:10px;width:33.5px;height:46px;line-height:46px;font-size:26.58px;color:#979797;text-align:right">25</div>
<div class="m cl" style="left:258.0px;top:10px;"><span class="cg" style="background:#efefef"><span style="color:#b8b82f">&lt;</span><b>url<i class="h">-</i>pattern</b><span style="color:#b8b82f">&gt;</span></span><span class="ct">/my/a/*</span><span class="cg" style="background:#efefef"><span style="color:#b8b82f">&lt;/</span><b>url<i class="h">-</i>pattern</b><span style="color:#b8b82f">&gt;</span></span></div>
<div class="m" style="left:9px;top:56px;width:33.5px;height:46px;line-height:46px;font-size:26.58px;color:#979797;text-align:right">26</div>
<div class="m cl" style="left:194.0px;top:56px;"><span class="cg" style="background:#efefef"><span style="color:#1f3d8c">&lt;/</span><b>servlet<i class="h">-</i>mapping</b><span style="color:#1f3d8c">&gt;</span></span></div>
<div class="m" style="left:9px;top:102px;width:33.5px;height:46px;line-height:46px;font-size:26.58px;color:#979797;text-align:right">27</div>
<div class="m" style="left:9px;top:148px;width:33.5px;height:46px;line-height:46px;font-size:26.58px;color:#979797;text-align:right">28</div>
<div class="m" style="left:9px;top:194px;width:33.5px;height:46px;line-height:46px;font-size:26.58px;color:#979797;text-align:right">29</div>
<div class="m cl" style="left:194.0px;top:194px;"><span class="cg" style="background:#efefef"><span style="color:#1f3d8c">&lt;</span><b>jsp<i class="h">-</i>config</b><span style="color:#1f3d8c">&gt;</span></span></div>
<div class="m" style="left:9px;top:240px;width:33.5px;height:46px;line-height:46px;font-size:26.58px;color:#979797;text-align:right">30</div>
<div class="m cl" style="left:258.0px;top:240px;"><span class="cg" style="background:#efefef"><span style="color:#b8b82f">&lt;</span><b>jsp<i class="h">-</i>property<i class="h">-</i>group</b><span style="color:#b8b82f">&gt;</span></span></div>
<div class="m" style="left:9px;top:286px;width:33.5px;height:46px;line-height:46px;font-size:26.58px;color:#979797;text-align:right">31</div>
<div class="m cl" style="left:322.0px;top:286px;"><span class="cg" style="background:#efefef"><span style="color:#a51fa8">&lt;</span><b>description</b><span style="color:#a51fa8">&gt;</span></span></div>
<div class="m" style="left:9px;top:332px;width:33.5px;height:46px;line-height:46px;font-size:26.58px;color:#979797;text-align:right">32</div>
<div class="m cl" style="left:386.0px;top:332px;"><span class="ct">Special property group for JSP Configuration JSP</span></div>
<div class="m" style="left:9px;top:378px;width:33.5px;height:46px;line-height:46px;font-size:26.58px;color:#979797;text-align:right">33</div>
<div class="m cl" style="left:386.0px;top:378px;"><span class="ct">example.</span></div>
<div class="m" style="left:9px;top:424px;width:33.5px;height:46px;line-height:46px;font-size:26.58px;color:#979797;text-align:right">34</div>
<div class="m cl" style="left:322.0px;top:424px;"><span class="cg" style="background:#efefef"><span style="color:#a51fa8">&lt;/</span><b>description</b><span style="color:#a51fa8">&gt;</span></span></div>
<div class="m" style="left:9px;top:470px;width:33.5px;height:46px;line-height:46px;font-size:26.58px;color:#979797;text-align:right">35</div>
<div class="m cl" style="left:322.0px;top:470px;"><span class="cg" style="background:#efefef"><span style="color:#a51fa8">&lt;</span><b>display<i class="h">-</i>name</b><span style="color:#a51fa8">&gt;</span></span><span class="ct">JSPConfiguration</span><span class="cg" style="background:#efefef"><span style="color:#a51fa8">&lt;/</span><b>display<i class="h">-</i>name</b><span style="color:#a51fa8">&gt;</span></span></div>
<div class="m" style="left:9px;top:516px;width:33.5px;height:46px;line-height:46px;font-size:26.58px;color:#979797;text-align:right">36</div>
<div class="m cl" style="left:322.0px;top:516px;"><span class="cg" style="background:#efefef"><span style="color:#a51fa8">&lt;</span><b>url<i class="h">-</i>pattern</b><span style="color:#a51fa8">&gt;</span></span><span class="ct">*.html</span><span class="cg" style="background:#efefef"><span style="color:#a51fa8">&lt;/</span><b>url<i class="h">-</i>pattern</b><span style="color:#a51fa8">&gt;</span></span></div>
<div class="m" style="left:9px;top:562px;width:33.5px;height:46px;line-height:46px;font-size:26.58px;color:#979797;text-align:right">37</div>
<div class="m cl" style="left:322.0px;top:562px;"><span class="cg" style="background:#efefef"><span style="color:#a51fa8">&lt;</span><b>el<i class="h">-</i>ignored</b><span style="color:#a51fa8">&gt;</span></span><span class="ct">true</span><span class="cg" style="background:#efefef"><span style="color:#a51fa8">&lt;/</span><b>el<i class="h">-</i>ignored</b><span style="color:#a51fa8">&gt;</span></span></div>
<div class="m" style="left:9px;top:608px;width:33.5px;height:46px;line-height:46px;font-size:26.58px;color:#979797;text-align:right">38</div>
<div class="m cl" style="left:322.0px;top:608px;"><span class="cg" style="background:#efefef"><span style="color:#a51fa8">&lt;</span><b>page<i class="h">-</i>encoding</b><span style="color:#a51fa8">&gt;</span></span><span class="ct">UTF<i class="h">-</i>8</span><span class="cg" style="background:#efefef"><span style="color:#a51fa8">&lt;/</span><b>page<i class="h">-</i>encoding</b><span style="color:#a51fa8">&gt;</span></span></div>
<div class="m" style="left:9px;top:654px;width:33.5px;height:46px;line-height:46px;font-size:26.58px;color:#979797;text-align:right">39</div>
<div class="m cl" style="left:322.0px;top:654px;"><span class="cg" style="background:#efefef"><span style="color:#a51fa8">&lt;</span><b>scripting<i class="h">-</i>invalid</b><span style="color:#a51fa8">&gt;</span></span><span class="ct">false</span><span class="cg" style="background:#efefef"><span style="color:#a51fa8">&lt;/</span><b>scripting<i class="h">-</i>invalid</b><span style="color:#a51fa8">&gt;</span></span></div>
<div class="m" style="left:9px;top:700px;width:33.5px;height:46px;line-height:46px;font-size:26.58px;color:#979797;text-align:right">40</div>
<div class="m cl" style="left:322.0px;top:700px;"><span class="cg" style="background:#f6ebbc"><span style="color:#a51fa8">&lt;</span><b>include<i class="h">-</i>prelude</b><span style="color:#a51fa8">&gt;</span></span><span class="cg" style="background:#f6ebbc"><span style="color:#a51fa8">&lt;/</span><b>include<i class="h">-</i>prelude</b><span style="color:#a51fa8">&gt;</span></span></div>
<div class="m" style="left:9px;top:746px;width:33.5px;height:46px;line-height:46px;font-size:26.58px;color:#979797;text-align:right">41</div>
<div class="m cl" style="left:322.0px;top:746px;"><span class="cg" style="background:#f6ebbc"><span style="color:#a51fa8">&lt;</span><b>include<i class="h">-</i>coda</b><span style="color:#a51fa8">&gt;</span></span><span class="cg" style="background:#f6ebbc"><span style="color:#a51fa8">&lt;/</span><b>include<i class="h">-</i>coda</b><span style="color:#a51fa8">&gt;</span></span></div>
<div class="m" style="left:9px;top:792px;width:33.5px;height:46px;line-height:46px;font-size:26.58px;color:#979797;text-align:right">42</div>
<div class="m cl" style="left:258.0px;top:792px;"><span class="cg" style="background:#efefef"><span style="color:#b8b82f">&lt;/</span><b>jsp<i class="h">-</i>property<i class="h">-</i>group</b><span style="color:#b8b82f">&gt;</span></span></div>
<div class="m" style="left:9px;top:838px;width:33.5px;height:46px;line-height:46px;font-size:26.58px;color:#979797;text-align:right">43</div>
<div class="m" style="left:9px;top:884px;width:33.5px;height:46px;line-height:46px;font-size:26.58px;color:#979797;text-align:right">44</div>
<div class="m cl" style="left:258.0px;top:884px;"><span class="cg" style="background:#efefef"><span style="color:#b8b82f">&lt;</span><b>jsp<i class="h">-</i>property<i class="h">-</i>group</b><span style="color:#b8b82f">&gt;</span></span></div>
<div class="m" style="left:9px;top:930px;width:33.5px;height:46px;line-height:46px;font-size:26.58px;color:#979797;text-align:right">45</div>
<div class="m" style="left:9px;top:976px;width:33.5px;height:46px;line-height:46px;font-size:26.58px;color:#979797;text-align:right">46</div>
<div class="m cl" style="left:322.0px;top:976px;"><span class="cg" style="background:#efefef"><span style="color:#a51fa8">&lt;</span><b>description</b><span style="color:#a51fa8">&gt;</span></span></div>
<div class="m" style="left:9px;top:1022px;width:33.5px;height:46px;line-height:46px;font-size:26.58px;color:#979797;text-align:right">47</div>
<div class="m cl" style="left:386.0px;top:1022px;"><span class="ct">Special property group for JSP Configuration JSP</span></div>
<div class="m" style="left:9px;top:1068px;width:33.5px;height:46px;line-height:46px;font-size:26.58px;color:#979797;text-align:right">48</div>
<div class="m cl" style="left:386.0px;top:1068px;"><span class="ct">example.</span></div>
<div class="m" style="left:9px;top:1114px;width:33.5px;height:46px;line-height:46px;font-size:26.58px;color:#979797;text-align:right">49</div>
<div class="m cl" style="left:322.0px;top:1114px;"><span class="cg" style="background:#efefef"><span style="color:#a51fa8">&lt;/</span><b>description</b><span style="color:#a51fa8">&gt;</span></span></div>
<div class="m" style="left:9px;top:1160px;width:33.5px;height:46px;line-height:46px;font-size:26.58px;color:#979797;text-align:right">50</div>
<div class="m cl" style="left:322.0px;top:1160px;"><span class="cg" style="background:#efefef"><span style="color:#a51fa8">&lt;</span><b>display<i class="h">-</i>name</b><span style="color:#a51fa8">&gt;</span></span><span class="ct">JSPConfiguration</span><span class="cg" style="background:#efefef"><span style="color:#a51fa8">&lt;/</span><b>display<i class="h">-</i>name</b><span style="color:#a51fa8">&gt;</span></span></div>
<div class="m" style="left:9px;top:1206px;width:33.5px;height:46px;line-height:46px;font-size:26.58px;color:#979797;text-align:right">51</div>
<div class="m cl" style="left:322.0px;top:1206px;"><span class="cg" style="background:#efefef"><span style="color:#a51fa8">&lt;</span><b>url<i class="h">-</i>pattern</b><span style="color:#a51fa8">&gt;</span></span><span class="ct">/my/a/b/*</span><span class="cg" style="background:#efefef"><span style="color:#a51fa8">&lt;/</span><b>url<i class="h">-</i>pattern</b><span style="color:#a51fa8">&gt;</span></span></div>
<div class="m" style="left:9px;top:1252px;width:33.5px;height:46px;line-height:46px;font-size:26.58px;color:#979797;text-align:right">52</div>
<div class="m cl" style="left:322.0px;top:1252px;"><span class="cg" style="background:#efefef"><span style="color:#a51fa8">&lt;</span><b>el<i class="h">-</i>ignored</b><span style="color:#a51fa8">&gt;</span></span><span class="ct">true</span><span class="cg" style="background:#efefef"><span style="color:#a51fa8">&lt;/</span><b>el<i class="h">-</i>ignored</b><span style="color:#a51fa8">&gt;</span></span></div>
<div class="m" style="left:9px;top:1298px;width:33.5px;height:46px;line-height:46px;font-size:26.58px;color:#979797;text-align:right">53</div>
<div class="m" style="left:9px;top:1344px;width:33.5px;height:46px;line-height:46px;font-size:26.58px;color:#979797;text-align:right">54</div>
<div class="m cl" style="left:322.0px;top:1344px;"><span class="cg" style="background:#efefef"><span style="color:#a51fa8">&lt;</span><b>page<i class="h">-</i>encoding</b><span style="color:#a51fa8">&gt;</span></span><span class="ct">UTF<i class="h">-</i>8</span><span class="cg" style="background:#efefef"><span style="color:#a51fa8">&lt;/</span><b>page<i class="h">-</i>encoding</b><span style="color:#a51fa8">&gt;</span></span></div>
<div class="m" style="left:9px;top:1390px;width:33.5px;height:46px;line-height:46px;font-size:26.58px;color:#979797;text-align:right">55</div>
<div class="m cl" style="left:322.0px;top:1390px;"><span class="cg" style="background:#efefef"><span style="color:#a51fa8">&lt;</span><b>scripting<i class="h">-</i>invalid</b><span style="color:#a51fa8">&gt;</span></span><span class="ct">false</span><span class="cg" style="background:#efefef"><span style="color:#a51fa8">&lt;/</span><b>scripting<i class="h">-</i>invalid</b><span style="color:#a51fa8">&gt;</span></span></div>
<div class="m" style="left:9px;top:1436px;width:33.5px;height:46px;line-height:46px;font-size:26.58px;color:#979797;text-align:right">56</div>
<div class="m cl" style="left:322.0px;top:1436px;"><span class="cg" style="background:#f6ebbc"><span style="color:#a51fa8">&lt;</span><b>include<i class="h">-</i>prelude</b><span style="color:#a51fa8">&gt;</span></span><span class="cg" style="background:#f6ebbc"><span style="color:#a51fa8">&lt;/</span><b>include<i class="h">-</i>prelude</b><span style="color:#a51fa8">&gt;</span></span></div>
<div class="m" style="left:9px;top:1482px;width:33.5px;height:46px;line-height:46px;font-size:26.58px;color:#979797;text-align:right">57</div>
<div class="m cl" style="left:322.0px;top:1482px;"><span class="cg" style="background:#f6ebbc"><span style="color:#a51fa8">&lt;</span><b>include<i class="h">-</i>coda</b><span style="color:#a51fa8">&gt;</span></span><span class="cg" style="background:#f6ebbc"><span style="color:#a51fa8">&lt;/</span><b>include<i class="h">-</i>coda</b><span style="color:#a51fa8">&gt;</span></span></div>
<div class="m" style="left:9px;top:1528px;width:33.5px;height:46px;line-height:46px;font-size:26.58px;color:#979797;text-align:right">58</div>
<div class="m cl" style="left:258.0px;top:1528px;"><span class="cg" style="background:#efefef"><span style="color:#b8b82f">&lt;/</span><b>jsp<i class="h">-</i>property<i class="h">-</i>group</b><span style="color:#b8b82f">&gt;</span></span></div>
<div class="m" style="left:9px;top:1574px;width:33.5px;height:46px;line-height:46px;font-size:26.58px;color:#979797;text-align:right">59</div>
<div class="m cl" style="left:194.0px;top:1574px;"><span class="cg" style="background:#efefef"><span style="color:#1f3d8c">&lt;/</span><b>jsp<i class="h">-</i>config</b><span style="color:#1f3d8c">&gt;</span></span></div>
<div class="m" style="left:9px;top:1620px;width:33.5px;height:46px;line-height:46px;font-size:26.58px;color:#979797;text-align:right">60</div>
<div class="m" style="left:9px;top:1666px;width:33.5px;height:46px;line-height:46px;font-size:26.58px;color:#979797;text-align:right">61</div>
<div class="m" style="left:9px;top:1712px;width:33.5px;height:46px;line-height:46px;font-size:26.58px;color:#979797;text-align:right">62</div>
<div class="m" style="left:9px;top:1758px;width:33.5px;height:46px;line-height:46px;font-size:26.58px;color:#979797;text-align:right">63</div>
<div class="m cl" style="left:194.0px;top:1758px;"><span class="cg" style="background:#efefef"><span style="color:#1f3d8c">&lt;</span><b>servlet</b><span style="color:#1f3d8c">&gt;</span></span></div>
<div class="m" style="left:9px;top:1804px;width:33.5px;height:46px;line-height:46px;font-size:26.58px;color:#979797;text-align:right">64</div>
<div class="m cl" style="left:258.0px;top:1804px;"><span class="cg" style="background:#efefef"><span style="color:#b8b82f">&lt;</span><b>servlet<i class="h">-</i>name</b><span style="color:#b8b82f">&gt;</span></span><span class="ct">BServlet</span><span class="cg" style="background:#efefef"><span style="color:#b8b82f">&lt;/</span><b>servlet<i class="h">-</i>name</b><span style="color:#b8b82f">&gt;</span></span></div>
<svg style="left:107px;top:56px;" width="22" height="46" viewBox="0 0 22 46"><g transform="translate(11 0)"><path d="M-8 31.2H8V18.2L0 10.4L-8 18.2Z" fill="#fff" stroke="#c9c9c9" stroke-width="1.8"/><path d="M-5 23.4H5" stroke="#bdbdbd" stroke-width="2"/></g></svg>
<svg style="left:107px;top:194px;" width="22" height="46" viewBox="0 0 22 46"><g transform="translate(11 0)"><path d="M-8 15.6H8V28.6L0 36.4L-8 28.6Z" fill="#fff" stroke="#c9c9c9" stroke-width="1.8"/><path d="M-5 24H5" stroke="#bdbdbd" stroke-width="2"/></g></svg>
<svg style="left:107px;top:240px;" width="22" height="46" viewBox="0 0 22 46"><g transform="translate(11 0)"><path d="M-8 15.6H8V28.6L0 36.4L-8 28.6Z" fill="#fff" stroke="#c9c9c9" stroke-width="1.8"/><path d="M-5 24H5" stroke="#bdbdbd" stroke-width="2"/></g></svg>
<svg style="left:107px;top:286px;" width="22" height="46" viewBox="0 0 22 46"><g transform="translate(11 0)"><path d="M-8 15.6H8V28.6L0 36.4L-8 28.6Z" fill="#fff" stroke="#c9c9c9" stroke-width="1.8"/><path d="M-5 24H5" stroke="#bdbdbd" stroke-width="2"/></g></svg>
<svg style="left:107px;top:424px;" width="22" height="46" viewBox="0 0 22 46"><g transform="translate(11 0)"><path d="M-8 31.2H8V18.2L0 10.4L-8 18.2Z" fill="#fff" stroke="#c9c9c9" stroke-width="1.8"/><path d="M-5 23.4H5" stroke="#bdbdbd" stroke-width="2"/></g></svg>
<svg style="left:107px;top:792px;" width="22" height="46" viewBox="0 0 22 46"><g transform="translate(11 0)"><path d="M-8 31.2H8V18.2L0 10.4L-8 18.2Z" fill="#fff" stroke="#c9c9c9" stroke-width="1.8"/><path d="M-5 23.4H5" stroke="#bdbdbd" stroke-width="2"/></g></svg>
<svg style="left:107px;top:884px;" width="22" height="46" viewBox="0 0 22 46"><g transform="translate(11 0)"><path d="M-8 15.6H8V28.6L0 36.4L-8 28.6Z" fill="#fff" stroke="#c9c9c9" stroke-width="1.8"/><path d="M-5 24H5" stroke="#bdbdbd" stroke-width="2"/></g></svg>
<svg style="left:107px;top:976px;" width="22" height="46" viewBox="0 0 22 46"><g transform="translate(11 0)"><path d="M-8 15.6H8V28.6L0 36.4L-8 28.6Z" fill="#fff" stroke="#c9c9c9" stroke-width="1.8"/><path d="M-5 24H5" stroke="#bdbdbd" stroke-width="2"/></g></svg>
<svg style="left:107px;top:1114px;" width="22" height="46" viewBox="0 0 22 46"><g transform="translate(11 0)"><path d="M-8 31.2H8V18.2L0 10.4L-8 18.2Z" fill="#fff" stroke="#c9c9c9" stroke-width="1.8"/><path d="M-5 23.4H5" stroke="#bdbdbd" stroke-width="2"/></g></svg>
<svg style="left:107px;top:1528px;" width="22" height="46" viewBox="0 0 22 46"><g transform="translate(11 0)"><path d="M-8 31.2H8V18.2L0 10.4L-8 18.2Z" fill="#fff" stroke="#c9c9c9" stroke-width="1.8"/><path d="M-5 23.4H5" stroke="#bdbdbd" stroke-width="2"/></g></svg>
<svg style="left:107px;top:1574px;" width="22" height="46" viewBox="0 0 22 46"><g transform="translate(11 0)"><path d="M-8 31.2H8V18.2L0 10.4L-8 18.2Z" fill="#fff" stroke="#c9c9c9" stroke-width="1.8"/><path d="M-5 23.4H5" stroke="#bdbdbd" stroke-width="2"/></g></svg>
<svg style="left:107px;top:1758px;" width="22" height="46" viewBox="0 0 22 46"><g transform="translate(11 0)"><path d="M-8 15.6H8V28.6L0 36.4L-8 28.6Z" fill="#fff" stroke="#c9c9c9" stroke-width="1.8"/><path d="M-5 24H5" stroke="#bdbdbd" stroke-width="2"/></g></svg>
<div style="left:305px;top:506.29999999999995px;width:608px;height:47.3px;border:5.5px solid #de2010;border-radius:6px;box-sizing:content-box"></div>
</div>
<svg style="left:3535px;top:124px;" width="22" height="22" viewBox="0 0 22 22"><circle cx="11" cy="11" r="10" fill="#c4625c"/><path d="M8.9 5.4h4.3v6.6H8.9zM8.9 14.2h4.3v3.8H8.9z" fill="#fff"/></svg>
<div class="u" style="left:3566px;top:115.50px;height:40px;line-height:40px;font-size:22px;color:#6e6e6e;letter-spacing:-2.500px;">111</div>
<svg style="left:3621px;top:122px;" width="26" height="24" viewBox="0 0 26 24"><path d="M13 1.2L25 22.8H1Z" fill="#e8c63e"/><path d="M11 8.2h4v6.6h-4zM11 16.6h4v4h-4z" fill="#fff"/></svg>
<div class="u" style="left:3652.5px;top:115.50px;height:40px;line-height:40px;font-size:22px;color:#6e6e6e;letter-spacing:-0.450px;">4</div>
<svg style="left:3681px;top:124px;" width="26" height="26" viewBox="0 0 26 26"><path d="M2 9.5L10 17L22.5 3" fill="none" stroke="#68a568" stroke-width="4.6"/><path d="M1.5 24L6.5 19.5L11 23.5L15.5 19.5L19.5 23.5L24 19" fill="none" stroke="#68a568" stroke-width="1.8"/></svg>
<div class="u" style="left:3713px;top:115.50px;height:40px;line-height:40px;font-size:22px;color:#6e6e6e;letter-spacing:-0.450px;">3</div>
<svg style="left:3745px;top:127px;" width="22" height="14" viewBox="0 0 22 14"><path d="M2.5 11.5L11 3.2L19.5 11.5" fill="none" stroke="#6e6e6e" stroke-width="3"/></svg>
<svg style="left:3787px;top:129px;" width="22" height="14" viewBox="0 0 22 14"><path d="M2.5 2.5L11 10.8L19.5 2.5" fill="none" stroke="#6e6e6e" stroke-width="3"/></svg>
<div style="left:3794px;top:177px;width:28px;height:4px;background:#c4625c;"></div>
<div style="left:3794px;top:245px;width:28px;height:4px;background:#c4625c;"></div>
<div style="left:3794px;top:261px;width:28px;height:4px;background:#c4625c;"></div>
<div style="left:3794px;top:279px;width:28px;height:4px;background:#c4625c;"></div>
<div style="left:3794px;top:295px;width:28px;height:4px;background:#c4625c;"></div>
<div style="left:3794px;top:329px;width:28px;height:4px;background:#c4625c;"></div>
<div style="left:3794px;top:347px;width:28px;height:4px;background:#c4625c;"></div>
<div style="left:3794px;top:363px;width:28px;height:4px;background:#c4625c;"></div>
<div style="left:3794px;top:381px;width:28px;height:4px;background:#c4625c;"></div>
<div style="left:3794px;top:447px;width:28px;height:4px;background:#c4625c;"></div>
<div style="left:3794px;top:465px;width:28px;height:4px;background:#c4625c;"></div>
<div style="left:3794px;top:481px;width:28px;height:4px;background:#c4625c;"></div>
<div style="left:3794px;top:499px;width:28px;height:4px;background:#c4625c;"></div>
<div style="left:3794px;top:533px;width:28px;height:4px;background:#c4625c;"></div>
<div style="left:3794px;top:549px;width:28px;height:4px;background:#c4625c;"></div>
<div style="left:3794px;top:567px;width:28px;height:4px;background:#c4625c;"></div>
<div style="left:3794px;top:583px;width:28px;height:4px;background:#c4625c;"></div>
<div style="left:3794px;top:633px;width:28px;height:4px;background:#c4625c;"></div>
<div style="left:3794px;top:651px;width:28px;height:4px;background:#c4625c;"></div>
<div style="left:3794px;top:667px;width:28px;height:4px;background:#c4625c;"></div>
<div style="left:3794px;top:719px;width:28px;height:4px;background:#c4625c;"></div>
<div style="left:3794px;top:735px;width:28px;height:4px;background:#c4625c;"></div>
<div style="left:3794px;top:753px;width:28px;height:4px;background:#c4625c;"></div>
<div style="left:3794px;top:769px;width:28px;height:4px;background:#c4625c;"></div>
<div style="left:3794px;top:787px;width:28px;height:4px;background:#c4625c;"></div>
<div style="left:3794px;top:803px;width:28px;height:4px;background:#c4625c;"></div>
<div style="left:3794px;top:821px;width:28px;height:4px;background:#c4625c;"></div>
<div style="left:3794px;top:837px;width:28px;height:4px;background:#c4625c;"></div>
<div style="left:3794px;top:853px;width:28px;height:4px;background:#c4625c;"></div>
<div style="left:3794px;top:887px;width:28px;height:4px;background:#c4625c;"></div>
<div style="left:3794px;top:921px;width:28px;height:4px;background:#c4625c;"></div>
<div style="left:3794px;top:973px;width:28px;height:4px;background:#c4625c;"></div>
<div style="left:3794px;top:989px;width:28px;height:4px;background:#c4625c;"></div>
<div style="left:3794px;top:1007px;width:28px;height:4px;background:#c4625c;"></div>
<div style="left:3794px;top:1023px;width:28px;height:4px;background:#c4625c;"></div>
<div style="left:3794px;top:1057px;width:28px;height:4px;background:#c4625c;"></div>
<div style="left:3794px;top:1073px;width:28px;height:4px;background:#c4625c;"></div>
<div style="left:3794px;top:1091px;width:28px;height:4px;background:#c4625c;"></div>
<div style="left:3794px;top:1107px;width:28px;height:4px;background:#c4625c;"></div>
<div style="left:3794px;top:1125px;width:28px;height:4px;background:#c4625c;"></div>
<div style="left:3794px;top:1141px;width:28px;height:4px;background:#c4625c;"></div>
<div style="left:3794px;top:1209px;width:28px;height:4px;background:#c4625c;"></div>
<div style="left:3794px;top:1227px;width:28px;height:4px;background:#c4625c;"></div>
<div style="left:3794px;top:1243px;width:28px;height:4px;background:#c4625c;"></div>
<div style="left:3794px;top:1261px;width:28px;height:4px;background:#c4625c;"></div>
<div style="left:3794px;top:1277px;width:28px;height:4px;background:#c4625c;"></div>
<div style="left:3794px;top:1429px;width:28px;height:4px;background:#c4625c;"></div>
<div style="left:3794px;top:1447px;width:28px;height:4px;background:#c4625c;"></div>
<div style="left:3794px;top:1463px;width:28px;height:4px;background:#c4625c;"></div>
<div style="left:3794px;top:1481px;width:28px;height:4px;background:#c4625c;"></div>
<div style="left:3794px;top:1531px;width:28px;height:4px;background:#c4625c;"></div>
<div style="left:3794px;top:1547px;width:28px;height:4px;background:#c4625c;"></div>
<div style="left:3794px;top:1565px;width:28px;height:4px;background:#c4625c;"></div>
<div style="left:3794px;top:1581px;width:28px;height:4px;background:#c4625c;"></div>
<div style="left:3794px;top:1599px;width:28px;height:4px;background:#c4625c;"></div>
<div style="left:3794px;top:1649px;width:28px;height:4px;background:#c4625c;"></div>
<div style="left:3794px;top:1667px;width:28px;height:4px;background:#c4625c;"></div>
<div style="left:3794px;top:1683px;width:28px;height:4px;background:#c4625c;"></div>
<div style="left:3794px;top:1701px;width:28px;height:4px;background:#c4625c;"></div>
<div style="left:3794px;top:1717px;width:28px;height:4px;background:#c4625c;"></div>
<div style="left:3794px;top:1733px;width:28px;height:4px;background:#c4625c;"></div>
<div style="left:3794px;top:1767px;width:28px;height:4px;background:#c4625c;"></div>
<div style="left:3802.5px;top:567.5px;width:13.5px;height:657px;border-radius:7px;background:rgba(0,0,0,.5)"></div>
<svg style="left:2501px;top:12px;" width="30" height="26" viewBox="0 0 30 26"><g fill="#5c5c5c"><circle cx="19" cy="7.5" r="6"/><path d="M9 24C9 17 13 14 19 14S29 17 29 24Z"/><circle cx="10.5" cy="8.5" r="6.3" stroke="#f2f2f2" stroke-width="1.6"/><path d="M0 24.5C0 17.5 4 14.6 10.5 14.6S21 17.5 21 24.5Z" stroke="#f2f2f2" stroke-width="1.6"/></g></svg>
<svg style="left:2537px;top:23.5px;" width="15" height="8" viewBox="0 0 15 8"><path d="M0 0H15L7.5 8Z" fill="#6e6e6e"/></svg>
<div style="left:2568px;top:5px;width:2px;height:40px;background:#cdcdcd;"></div>
<svg style="left:2585px;top:10px;" width="34" height="30" viewBox="0 0 34 30"><g fill="#68a568"><path d="M12.4 1.2L19.4 1.8L6.8 16.8L1 11.8Z"/><path d="M15.7 7.4L31.4 23.4L26.5 28.7L10.7 13.3Z"/></g></svg>
<div style="left:2640.6px;top:3px;width:207px;height:40px;border:2px solid #c4c4c4;border-radius:7px;background:#fff"></div>
<svg style="left:2659px;top:10px;" width="34" height="34" viewBox="0 0 34 34"><rect x="5.5" y="1.5" width="22" height="18" fill="#f4f6f8" stroke="#d5d9de" stroke-width="1.5"/><rect x="1" y="6" width="22" height="19" fill="#fff" stroke="#d5d9de" stroke-width="1.5"/><rect x="3.5" y="11" width="17" height="11.5" fill="#dceaf5"/><circle cx="27.3" cy="27.7" r="4.4" fill="#62d043" stroke="#8d9a8d" stroke-width="1"/></svg>
<div class="u" style="left:2697.3px;top:5.00px;height:40px;line-height:40px;font-size:22px;color:#000;letter-spacing:-0.527px;">Bootstrap</div>
<svg style="left:2815px;top:21px;" width="19" height="10" viewBox="0 0 19 10"><path d="M0 0H18.5L9.2 9.8Z" fill="#6e6e6e"/></svg>
<svg style="left:2880px;top:12px;" width="20" height="26" viewBox="0 0 20 26"><path d="M0.5 0.8L19.5 13L0.5 25.2Z" fill="#68a568"/></svg>
<svg style="left:2925px;top:9px;" width="34" height="34" viewBox="0 0 34 34"><g fill="#68a568"><path d="M6.8 2.6L10.8 7.6M19.6 2.6L15.6 7.6" stroke="#68a568" stroke-width="2.4" fill="none"/><ellipse cx="13.2" cy="17.6" rx="8" ry="11.8"/><rect x="3" y="10.9" width="20.4" height="3.5"/><rect x="3" y="17.2" width="20.4" height="3.7"/><rect x="3" y="23.4" width="20.4" height="3.4"/></g><rect x="8" y="15.3" width="10.4" height="1.9" fill="#f2f2f2"/><rect x="8" y="20.9" width="10.4" height="1.9" fill="#f2f2f2"/><circle cx="27.4" cy="28.4" r="4.6" fill="#62d043" stroke="#8d9a8d" stroke-width="1"/></svg>
<svg style="left:2977px;top:12px;" width="32" height="30" viewBox="0 0 32 30"><path d="M1 3.5L11 0.5L21 3.5V12C21 19 16 22.5 11 24.5C6 22.5 1 19 1 12Z" fill="#5c5c5c"/><path d="M11 3.2L18.3 5.4V12C18.3 13 18.2 14 18 14.6H11Z" fill="#f2f2f2"/><path d="M15 11L32 20.5L15 30Z" fill="#f2f2f2"/><path d="M17 13.3L30.4 20.8L17 28.5Z" fill="#68a568"/></svg>
<svg style="left:3025px;top:11px;" width="34" height="32" viewBox="0 0 34 32"><circle cx="12.5" cy="12.8" r="10" fill="none" stroke="#5c5c5c" stroke-width="2.8"/><path d="M12.5 6.5V13.5L8.5 17" fill="none" stroke="#5c5c5c" stroke-width="2.4"/><path d="M14 11L32 21L14 31Z" fill="#f2f2f2"/><path d="M16.4 13.7L30.6 21.2L16.4 29.6Z" fill="#d8494f"/></svg>
<svg style="left:3070.5px;top:23.5px;" width="15" height="8" viewBox="0 0 15 8"><path d="M0 0H15L7.5 8Z" fill="#6e6e6e"/></svg>
<svg style="left:3110px;top:12px;" width="20" height="26" viewBox="0 0 20 26"><path d="M0.5 0.8L19.5 13L0.5 25.2Z" fill="#c6c6c6"/></svg>
<div style="left:3160px;top:15px;width:20px;height:20px;background:#d2595d;"></div>
<div style="left:3202px;top:5px;width:2px;height:40px;background:#cdcdcd;"></div>
<div class="u" style="left:3222.5px;top:5.00px;height:40px;line-height:40px;font-size:22px;color:#000;letter-spacing:-1.396px;">Git:</div>
<svg style="left:3284px;top:11px;" width="26" height="26" viewBox="0 0 26 26"><path d="M23.5 3L5 21.5" stroke="#3e96dc" stroke-width="3.8" fill="none"/><path d="M2 8.5V24.5H18Z" fill="#3e96dc"/></svg>
<svg style="left:3334px;top:11px;" width="30" height="26" viewBox="0 0 30 26"><path d="M2.5 13.5L10.5 21.5L27.5 3.5" fill="none" stroke="#68a568" stroke-width="4.2"/></svg>
<svg style="left:3387px;top:12px;" width="26" height="26" viewBox="0 0 26 26"><path d="M2.5 24L19.5 6.5" stroke="#68a568" stroke-width="3.8" fill="none"/><path d="M8 2.5H24V18.5Z" fill="#68a568"/></svg>
<svg style="left:3437px;top:10px;" width="30" height="30" viewBox="0 0 30 30"><circle cx="15" cy="15" r="12.2" fill="none" stroke="#c2c2c2" stroke-width="3"/><path d="M15 8V15.5L19.8 18.8" fill="none" stroke="#c2c2c2" stroke-width="2.8"/></svg>
<svg style="left:3491px;top:10px;" width="30" height="30" viewBox="0 0 30 30"><path d="M3 10.5H17.5C22.5 10.5 26 13.8 26 18.5S22.5 26.5 17.5 26.5H11" fill="none" stroke="#5c5c5c" stroke-width="3.2"/><path d="M1 10.5L9.5 3.2V17.8Z" fill="#5c5c5c"/></svg>
<div style="left:3536px;top:5px;width:2px;height:40px;background:#cdcdcd;"></div>
<svg style="left:3554px;top:10px;" width="34" height="30" viewBox="0 0 34 30"><g fill="#c6c6c6"><rect x="11.5" y="1" width="9.5" height="27"/><path d="M0 5.5H5V2.5L10 6.8L5 11V8H0zM22.5 18.5H27.5V15.5L32.5 19.8L27.5 24V21H22.5z"/></g></svg>
<div style="left:3602px;top:5px;width:2px;height:40px;background:#cdcdcd;"></div>
<svg style="left:3618px;top:8px;" width="38" height="34" viewBox="0 0 38 34"><text x="1" y="22.3" font-family="Noto Sans CJK SC,WenQuanYi Zen Hei,sans-serif" font-size="23" font-weight="bold" fill="#5c5c5c">文</text><text x="16.2" y="30.7" font-family="DejaVu Sans,Liberation Sans,sans-serif" font-size="23" font-weight="bold" fill="#3f83e8" stroke="#f2f2f2" stroke-width="0">A</text></svg>
<svg style="left:3672px;top:9px;" width="32" height="32" viewBox="0 0 32 32"><circle cx="13.3" cy="13.1" r="9.4" fill="none" stroke="#5c5c5c" stroke-width="4"/><path d="M20.2 20L29.2 28.6" stroke="#5c5c5c" stroke-width="4.8"/></svg>
<svg style="left:3723px;top:8px;" width="34" height="34" viewBox="0 0 34 34"><circle cx="17" cy="16.9" r="16" fill="#e5a535"/><path d="M17 9L25 17.5H19.2V25H14.8V17.5H9Z" fill="#fff"/></svg>
<svg style="left:3776px;top:9px;" width="32" height="32" viewBox="0 0 32 32"><defs><linearGradient id="cg1" x1="0" y1="0" x2="0.25" y2="1"><stop offset="0" stop-color="#f6f25c"/><stop offset=".5" stop-color="#9fe08e"/><stop offset="1" stop-color="#4cc4e6"/></linearGradient><linearGradient id="cg2" x1="0" y1="0" x2="1" y2="1"><stop offset="0" stop-color="#5fd27e"/><stop offset=".55" stop-color="#3fa6c4"/><stop offset="1" stop-color="#2c72d8"/></linearGradient><linearGradient id="cg3" x1="1" y1="0" x2="0" y2="1"><stop offset="0" stop-color="#23409f"/><stop offset="1" stop-color="#2f86de"/></linearGradient></defs><path d="M4.7 2C1 9 1.2 22 7.5 29.7C12 26 17 21 19 15.4C16 10 11 5 4.7 2Z" fill="url(#cg1)"/><path d="M4.7 2C14 1.5 25 7 30 14L19 15.4C16 10 11 5 4.7 2Z" fill="url(#cg2)"/><path d="M30 14C25 21.5 15 28.5 7.5 29.7C12 26 17 21 19 15.4Z" fill="url(#cg3)"/></svg>
<div class="u" style="left:1235.7308970099668px;top:1926.20px;height:40px;line-height:40px;font-size:24px;color:#4d4d4d;letter-spacing:0.546px;">web<i>-</i>app</div>
<svg style="left:1361.392026578073px;top:1934px;" width="12" height="20" viewBox="0 0 12 20"><path d="M2.5 3.5L8.5 10L2.5 16.5" fill="none" stroke="#8e8e8e" stroke-width="1.8"/></svg>
<div class="u" style="left:1386.4784053156145px;top:1926.20px;height:40px;line-height:40px;font-size:24px;color:#4d4d4d;letter-spacing:0.387px;">jsp<i>-</i>config</div>
<svg style="left:1529.5813953488373px;top:1934px;" width="12" height="20" viewBox="0 0 12 20"><path d="M2.5 3.5L8.5 10L2.5 16.5" fill="none" stroke="#8e8e8e" stroke-width="1.8"/></svg>
<div class="u" style="left:1555.4983388704318px;top:1926.20px;height:40px;line-height:40px;font-size:24px;color:#4d4d4d;letter-spacing:0.444px;">jsp<i>-</i>property<i>-</i>group</div>
<svg style="left:1807.8205980066446px;top:1934px;" width="12" height="20" viewBox="0 0 12 20"><path d="M2.5 3.5L8.5 10L2.5 16.5" fill="none" stroke="#8e8e8e" stroke-width="1.8"/></svg>
<div class="u" style="left:1834.5681063122925px;top:1926.20px;height:40px;line-height:40px;font-size:24px;color:#4d4d4d;letter-spacing:-0.556px;">description</div>
<div class="u" style="left:35px;top:1975.00px;height:40px;line-height:40px;font-size:24px;color:#1a1a1a;letter-spacing:-1.106px;">Debug:</div>
<svg style="left:145.8px;top:1985px;" width="20" height="20" viewBox="0 0 20 20"><path d="M3 3L17 17M17 3L3 17" stroke="#b3babf" stroke-width="1.8" fill="none"/></svg>
<svg style="left:179px;top:1978px;" width="34" height="34" viewBox="0 0 34 34"><rect x="5.8" y="1.8" width="22.5" height="19" fill="#f2f2f2" stroke="#aeb6bf" stroke-width="1.6"/><rect x="5" y="1" width="24" height="4.5" fill="#aeb6bf"/><rect x="1.8" y="8" width="22.5" height="18" fill="#eef0f2" stroke="#aeb6bf" stroke-width="1.6"/><rect x="1" y="7.2" width="24" height="4.6" fill="#aeb6bf"/><rect x="5" y="13.2" width="16" height="10" fill="#9fd0e8"/><circle cx="27.3" cy="27.5" r="4.4" fill="#62d043" stroke="#8d9a8d" stroke-width="1"/></svg>
<div class="u" style="left:217px;top:1975.00px;height:40px;line-height:40px;font-size:24px;color:#1a1a1a;letter-spacing:-0.809px;">Bootstrap</div>
<div style="left:134px;top:2015.5px;width:220px;height:5.5px;background:#a3abbd;"></div>
<svg style="left:3728px;top:1977px;" width="32" height="32" viewBox="0 0 32 32"><path d="M13.07 7.72L13.36 4.09L18.64 4.09L18.93 7.72L21.70 9.32L25.00 7.76L27.63 12.33L24.64 14.40L24.64 17.60L27.63 19.67L25.00 24.24L21.70 22.68L18.93 24.28L18.64 27.91L13.36 27.91L13.07 24.28L10.30 22.68L7.00 24.24L4.37 19.67L7.36 17.60L7.36 14.40L4.37 12.33L7.00 7.76L10.30 9.32ZM20.8 16A4.8 4.8 0 1 0 11.2 16A4.8 4.8 0 1 0 20.8 16Z" fill="#7f7f7f" fill-rule="evenodd" stroke="#7f7f7f" stroke-width="1.2" stroke-linejoin="round"/></svg>
<div style="left:3784px;top:1991px;width:24px;height:4px;background:#7f7f7f;"></div>
<svg style="left:38px;top:2033.5px;" width="32" height="34" viewBox="0 0 32 34"><path d="M14.5 28.5C7.5 28.5 3.5 24 3.5 18.5S8 8.8 14.5 8.8H19" fill="none" stroke="#68a568" stroke-width="4.2"/><path d="M17.5 1L29 9L17.5 17Z" fill="#68a568"/><rect x="16.3" y="21.3" width="9.6" height="9.4" fill="#6e6e6e"/></svg>
<svg style="left:38px;top:2086px;" width="30" height="30" viewBox="0 0 30 30"><path d="M3 27.5L15.5 14" stroke="#6e6e6e" stroke-width="5.6" fill="none"/><path d="M27.6 6.2L22.8 11L19.4 10.6L19 7.2L23.8 2.4C20.5 1.2 17 2 15 4.5C13 7 13 10.5 14.6 13L17 15.4C19.5 17 23 17 25.5 15C28 13 28.8 9.5 27.6 6.2Z" fill="#6e6e6e"/></svg>
<div style="left:32px;top:2133px;width:41px;height:2px;background:#d1d1d1;"></div>
<svg style="left:40px;top:2152px;" width="28" height="28" viewBox="0 0 28 28"><rect x="1" y="2" width="5.2" height="23" fill="#68a568"/><path d="M10 2L25 13.5L10 25Z" fill="#68a568"/></svg>
<div style="left:44px;top:2207px;width:5px;height:22px;background:#c2c2c2;"></div>
<div style="left:55px;top:2207px;width:5px;height:22px;background:#c2c2c2;"></div>
<div style="left:42px;top:2261px;width:20px;height:20px;background:#d2595d;"></div>
<div style="left:32px;top:2303.5px;width:41px;height:2px;background:#d1d1d1;"></div>
<svg style="left:38px;top:2320px;" width="30" height="30" viewBox="0 0 30 30"><circle cx="18" cy="10.5" r="8.6" fill="#d2595d"/><circle cx="11" cy="18.5" r="9.6" fill="#f2f2f2"/><circle cx="11" cy="18.5" r="8.4" fill="#d2595d"/></svg>
<div class="u" style="left:44.5px;top:2385.50px;height:40px;line-height:40px;font-size:22px;color:#6e6e6e;letter-spacing:-0.450px;">»</div>
<svg style="left:95px;top:2050px;" width="16" height="16" viewBox="0 0 16 16"><circle cx="8" cy="7.8" r="7.2" fill="#e9a93c"/><path d="M8 3.2V11M4.6 8L8 11.4L11.4 8" fill="none" stroke="#5a4320" stroke-width="1.6"/></svg>
<div class="u" style="left:109px;top:2029.50px;height:40px;line-height:40px;font-size:22px;color:#000;letter-spacing:-0.370px;">Variables | Memory | Overhead | Threads</div>
<div class="u" style="left:596px;top:2029.50px;height:40px;line-height:40px;font-size:22px;color:#000;letter-spacing:-0.385px;">Console</div>
<div class="u" style="left:732.8px;top:2029.50px;height:40px;line-height:40px;font-size:22px;color:#000;letter-spacing:-0.906px;">Frames</div>
<div style="left:706.5px;top:2072px;width:129.5px;height:4.5px;background:#a3abbd;"></div>
<div style="left:848px;top:2037px;width:24px;height:4px;background:#5e5e5e;"></div>
<div style="left:848px;top:2045px;width:24px;height:6px;background:#4a9bdc;"></div>
<div style="left:848px;top:2055px;width:24px;height:4px;background:#5e5e5e;"></div>
<div style="left:892px;top:2027.5px;width:2px;height:39px;background:#cdcdcd;"></div>
<svg style="left:910px;top:2030px;" width="32" height="32" viewBox="0 0 32 32"><rect x="3" y="25" width="24" height="4" fill="#5e5e5e"/><path d="M3.5 16.5L13 6.5L21.5 15.5" fill="none" stroke="#4a9bdc" stroke-width="3.8"/><path d="M28 8.5V21H15.5Z" fill="#4a9bdc"/></svg>
<svg style="left:963.9px;top:2030px;" width="28" height="32" viewBox="0 0 28 32"><g transform="translate(14 0)"><rect x="-12" y="25" width="24" height="4" fill="#5e5e5e"/><path d="M-2 3H2V12H9.2L0 22L-9.2 12H-2Z" fill="#4a9bdc"/></g></svg>
<svg style="left:1015.8px;top:2030px;" width="28" height="32" viewBox="0 0 28 32"><g transform="translate(14 0)"><rect x="-12" y="25" width="24" height="4" fill="#5e5e5e"/><path d="M-2 3H2V12H9.2L0 22L-9.2 12H-2Z" fill="#d2595d"/></g></svg>
<svg style="left:1067.9px;top:2030px;" width="28" height="32" viewBox="0 0 28 32"><g transform="translate(14 0)"><rect x="-12" y="25" width="24" height="4" fill="#5e5e5e"/><path d="M-2 22.5H2V13.5H9.2L0 3.5L-9.2 13.5H-2Z" fill="#4a9bdc"/></g></svg>
<svg style="left:1119px;top:2032px;" width="30" height="30" viewBox="0 0 30 30"><path d="M3 3L15 15M15 3L3 15" stroke="#d2595d" stroke-width="4"/><path d="M17 11H25V25H11V17" fill="none" stroke="#5e5e5e" stroke-width="3.8"/></svg>
<svg style="left:1171px;top:2032px;" width="32" height="32" viewBox="0 0 32 32"><path d="M3 3.5L13 13.5" stroke="#4a9bdc" stroke-width="4"/><path d="M17.5 4V17.5H4Z" fill="#4a9bdc"/><path d="M19.5 13.5H23Q24 13.5 24 14.5Q24 13.5 25 13.5H28.5M24 14V28M19.5 28.5H23Q24 28.5 24 27.5Q24 28.5 25 28.5H28.5" fill="none" stroke="#3a3a3a" stroke-width="1.7"/></svg>
<div style="left:1218px;top:2027.5px;width:2px;height:39px;background:#cdcdcd;"></div>
<svg style="left:1240px;top:2034px;" width="26" height="26" viewBox="0 0 26 26"><rect x="0" y="0.8" width="24.4" height="24.4" fill="#5e5e5e"/><rect x="3.8" y="4.8" width="16.8" height="4" fill="#f2f2f2"/><rect x="3.8" y="11.5" width="4.4" height="3.8" fill="#f2f2f2"/><rect x="10.0" y="11.5" width="4.4" height="3.8" fill="#f2f2f2"/><rect x="16.2" y="11.5" width="4.4" height="3.8" fill="#f2f2f2"/><rect x="3.8" y="17.5" width="4.4" height="3.8" fill="#f2f2f2"/><rect x="10.0" y="17.5" width="4.4" height="3.8" fill="#f2f2f2"/><rect x="16.2" y="17.5" width="4.4" height="3.8" fill="#f2f2f2"/></svg>
<svg style="left:1291px;top:2035px;" width="26" height="24" viewBox="0 0 26 24"><g fill="#c4c4c4"><rect x="0" y="1.5" width="9" height="3.6"/><rect x="0" y="10" width="7" height="3.6"/><rect x="0" y="18.5" width="9" height="3.6"/><rect x="14" y="1.5" width="10.5" height="3.6"/><rect x="15.5" y="10" width="9" height="3.6"/><rect x="14" y="18.5" width="10.5" height="3.6"/><path d="M6.5 22.2L13 1.4H16L9.5 22.2Z"/></g></svg>
<svg style="left:3785px;top:2036px;" width="36" height="34" viewBox="0 0 36 34"><g fill="#6e6e6e"><rect x="1" y="1.2" width="14" height="9.6"/><rect x="17.4" y="1.2" width="7.7" height="9.6"/><rect x="1" y="13.3" width="24.1" height="7.6"/></g><path d="M23.3 25.2H35L29.2 31Z" fill="#2b2b2b"/></svg>
<svg style="left:3729px;top:2092px;" width="28" height="28" viewBox="0 0 28 28"><path d="M0.8 1.3H25L15.8 12.5V25H10V12.5Z" fill="#6e6e6e"/></svg>
<svg style="left:3784px;top:2101px;" width="20" height="12" viewBox="0 0 20 12"><path d="M0 0H18L9 9.8Z" fill="#6e6e6e"/></svg>
<svg style="left:100px;top:2088px;" width="34" height="32" viewBox="0 0 34 32"><path d="M3.8 16.5L11.7 24L28 7.2" fill="none" stroke="#ea9a6e" stroke-width="5"/></svg>
<div class="u" style="left:138px;top:2086.00px;height:40px;line-height:40px;font-size:26px;color:#000;letter-spacing:-0.080px;">"http<i>-</i>bio<i>-</i>8080<i>-</i>exec<i>-</i>1"@2,451 in group "main": RUNNING</div>
<div style="left:82px;top:2133px;width:3740px;height:2px;background:#d9d9d9;"></div>
<div style="left:82px;top:2135px;width:3740px;height:40px;background:#d5d5d5;"></div>
<div class="u" style="left:114.53488372093024px;top:2136.50px;height:40px;line-height:40px;font-size:26px;color:#000;letter-spacing:-0.528px;">internalMapExtensionWrapper:1337, Mapper</div>
<div class="u" style="left:687.2093023255815px;top:2136.50px;height:40px;line-height:40px;font-size:26px;color:#000;letter-spacing:-0.612px;font-style:italic;">(org.apache.tomcat.util.http.mapper)</div>
<div class="u" style="left:114.53488372093024px;top:2176.50px;height:40px;line-height:40px;font-size:26px;color:#000;letter-spacing:-0.540px;">internalMapWrapper:1099, Mapper</div>
<div class="u" style="left:563.953488372093px;top:2176.50px;height:40px;line-height:40px;font-size:26px;color:#8c8c8c;letter-spacing:-0.612px;font-style:italic;">(org.apache.tomcat.util.http.mapper)</div>
<div class="u" style="left:114.53488372093024px;top:2216.50px;height:40px;line-height:40px;font-size:26px;color:#000;letter-spacing:-0.455px;">internalMap:1006, Mapper</div>
<div class="u" style="left:459.30232558139534px;top:2216.50px;height:40px;line-height:40px;font-size:26px;color:#8c8c8c;letter-spacing:-0.629px;font-style:italic;">(org.apache.tomcat.util.http.mapper)</div>
<div class="u" style="left:114.53488372093024px;top:2256.50px;height:40px;line-height:40px;font-size:26px;color:#000;letter-spacing:-0.578px;">map:840, Mapper</div>
<div class="u" style="left:347.6744186046512px;top:2256.50px;height:40px;line-height:40px;font-size:26px;color:#8c8c8c;letter-spacing:-0.612px;font-style:italic;">(org.apache.tomcat.util.http.mapper)</div>
<div class="u" style="left:114.53488372093024px;top:2296.50px;height:40px;line-height:40px;font-size:26px;color:#000;letter-spacing:-0.539px;">postParseRequest:807, CoyoteAdapter</div>
<div class="u" style="left:609.3023255813954px;top:2296.50px;height:40px;line-height:40px;font-size:26px;color:#8c8c8c;letter-spacing:-0.715px;font-style:italic;">(org.apache.catalina.connector)</div>
<div class="u" style="left:114.53488372093024px;top:2336.50px;height:40px;line-height:40px;font-size:26px;color:#000;letter-spacing:-0.604px;">service:458, CoyoteAdapter</div>
<div class="u" style="left:472.6744186046512px;top:2336.50px;height:40px;line-height:40px;font-size:26px;color:#8c8c8c;letter-spacing:-0.696px;font-style:italic;">(org.apache.catalina.connector)</div>
<div class="u" style="left:97.7px;top:2383.00px;height:40px;line-height:40px;font-size:22px;color:#7a7a7a;letter-spacing:-0.718px;">Switch frames from anywhere in the IDE with ⌥⌘↑ and ⌥⌘↓</div>
<svg style="left:3788px;top:2393px;" width="20" height="20" viewBox="0 0 20 20"><path d="M3 3L17 17M17 3L3 17" stroke="#b3babf" stroke-width="1.8" fill="none"/></svg>
<div style="left:0;top:54px;width:22px;height:2371px;overflow:hidden">
<div class="u" style="left:-9.4px;top:93.5px;height:25px;line-height:25px;font-size:22px;color:#1a1a1a;letter-spacing:-0.708px;transform-origin:0 0;transform:rotate(-90deg)">Project</div>
<svg style="left:0px;top:105px;" width="16" height="18" viewBox="0 0 16 18"><path d="M-6 4H4L7 0.5H14V17.5H-6Z" fill="#6e6e6e"/></svg>
<div class="u" style="left:-9.4px;top:264px;height:25px;line-height:25px;font-size:22px;color:#1a1a1a;letter-spacing:-0.916px;transform-origin:0 0;transform:rotate(-90deg)">Structure</div>
<svg style="left:0px;top:277px;" width="14" height="18" viewBox="0 0 14 18"><g fill="#6e6e6e"><rect x="-4" y="0" width="6" height="6"/><rect x="5" y="0.5" width="7" height="6.5"/><rect x="5" y="10" width="7" height="6.5"/><rect x="-4" y="10.5" width="6" height="6"/></g></svg>
<div class="u" style="left:-9.4px;top:482.5px;height:25px;line-height:25px;font-size:22px;color:#1a1a1a;letter-spacing:-0.697px;transform-origin:0 0;transform:rotate(-90deg)">Pull Requests</div>
<svg style="left:0px;top:489px;" width="16" height="26" viewBox="0 0 16 26"><path d="M-2 22.5H10V9" fill="none" stroke="#6e6e6e" stroke-width="3.2"/><path d="M3.5 11.5L10 3L16.5 11.5Z" fill="#6e6e6e"/></svg>
<div class="u" style="left:-9.4px;top:680.5px;height:25px;line-height:25px;font-size:22px;color:#1a1a1a;letter-spacing:-0.320px;transform-origin:0 0;transform:rotate(-90deg)">Json Parser</div>
<div class="u" style="left:-9.4px;top:816px;height:25px;line-height:25px;font-size:22px;color:#1a1a1a;letter-spacing:-1.569px;transform-origin:0 0;transform:rotate(-90deg)">Database</div>
<svg style="left:0px;top:826px;" width="16" height="26" viewBox="0 0 16 26"><g fill="none" stroke="#7a7a7a" stroke-width="2.6"><path d="M-3 4.5Q6 8 14.5 4.5M-3 10Q6 13.5 14.5 10M-3 15.5Q6 19 14.5 15.5M-3 21Q6 24.5 14.5 21"/></g></svg>
<div class="u" style="left:-9.4px;top:968px;height:25px;line-height:25px;font-size:22px;color:#1a1a1a;letter-spacing:-0.669px;transform-origin:0 0;transform:rotate(-90deg)">Codota</div>
<svg style="left:0px;top:977px;" width="18" height="26" viewBox="0 0 18 26"><rect x="-8" y="0.5" width="24" height="24.5" rx="5" fill="#4fd1a1"/><path d="M2 9L6 12.5L2 16" stroke="#fff" stroke-width="2" fill="none"/><rect x="8" y="17" width="2.4" height="2.4" fill="#fff"/><rect x="3" y="17" width="2.4" height="2.4" fill="#fff"/></svg>
<div class="u" style="left:-9.4px;top:1080.5px;height:25px;line-height:25px;font-size:22px;color:#1a1a1a;letter-spacing:-1.055px;transform-origin:0 0;transform:rotate(-90deg)">Ant</div>
<svg style="left:0px;top:1088px;" width="16" height="28" viewBox="0 0 16 28"><g transform="translate(1 14) scale(1.55)" fill="#5e5e5e" stroke="#5e5e5e"><ellipse cx="0" cy="-4.2" rx="2.2" ry="2.2" stroke="none"/><ellipse cx="0" cy="2.2" rx="3.1" ry="4.6" stroke="none"/><path d="M-2 -1L-7 -5M2 -1L7 -5M-3 1.5H-8M3 1.5H8M-2.5 4L-7 8M2.5 4L7 8" stroke-width="1.6" fill="none"/></g></svg>
<div class="u" style="left:-9.4px;top:1303px;height:25px;line-height:25px;font-size:22px;color:#1a1a1a;letter-spacing:-0.838px;transform-origin:0 0;transform:rotate(-90deg)">Big Data Tools</div>
<svg style="left:0px;top:1312px;" width="14" height="32" viewBox="0 0 14 32"><path d="M-6 2.5A13.5 13.5 0 0 1 -6 29.5" fill="none" stroke="#7a7a7a" stroke-width="4.4"/></svg>
<div class="u" style="left:-9.4px;top:1423px;height:25px;line-height:25px;font-size:22px;color:#1a1a1a;letter-spacing:0.477px;transform-origin:0 0;transform:rotate(-90deg)">JOL</div>
<svg style="left:0px;top:1428px;" width="16" height="28" viewBox="0 0 16 28"><rect x="-6" y="1" width="22" height="26" fill="#8bc34a"/><rect x="10" y="1" width="6" height="26" fill="#e6d84a"/><rect x="-2" y="4" width="10" height="8" fill="#2b2b2b"/><rect x="-2" y="15" width="10" height="8" fill="#2b2b2b"/><path d="M10 7H16M10 13.5H16M10 20H16" stroke="#8bc34a" stroke-width="1.6"/></svg>
<div class="u" style="left:-9.4px;top:2122px;height:25px;line-height:25px;font-size:22px;color:#1a1a1a;letter-spacing:0.197px;transform-origin:0 0;transform:rotate(-90deg)">jclasslib</div>
<svg style="left:0px;top:2127px;" width="16" height="26" viewBox="0 0 16 26"><rect x="-8" y="1" width="23" height="23.5" fill="#d6e6f5"/><g fill="#5b9bd5"><rect x="-2.4" y="3.0" width="2.2" height="3"/><rect x="1.2000000000000002" y="3.0" width="2.2" height="3"/><rect x="4.800000000000001" y="3.0" width="2.2" height="3"/><rect x="8.4" y="3.0" width="2.2" height="3"/><rect x="-6.0" y="7.4" width="2.2" height="3"/><rect x="1.2000000000000002" y="7.4" width="2.2" height="3"/><rect x="4.800000000000001" y="7.4" width="2.2" height="3"/><rect x="8.4" y="7.4" width="2.2" height="3"/><rect x="12.0" y="7.4" width="2.2" height="3"/><rect x="-6.0" y="11.8" width="2.2" height="3"/><rect x="-2.4" y="11.8" width="2.2" height="3"/><rect x="4.800000000000001" y="11.8" width="2.2" height="3"/><rect x="8.4" y="11.8" width="2.2" height="3"/><rect x="12.0" y="11.8" width="2.2" height="3"/><rect x="-6.0" y="16.200000000000003" width="2.2" height="3"/><rect x="-2.4" y="16.200000000000003" width="2.2" height="3"/><rect x="1.2000000000000002" y="16.200000000000003" width="2.2" height="3"/><rect x="8.4" y="16.200000000000003" width="2.2" height="3"/><rect x="12.0" y="16.200000000000003" width="2.2" height="3"/><rect x="-6.0" y="20.6" width="2.2" height="3"/><rect x="-2.4" y="20.6" width="2.2" height="3"/><rect x="1.2000000000000002" y="20.6" width="2.2" height="3"/><rect x="4.800000000000001" y="20.6" width="2.2" height="3"/><rect x="12.0" y="20.6" width="2.2" height="3"/></g></svg>
<div class="u" style="left:-9.4px;top:2313px;height:25px;line-height:25px;font-size:22px;color:#1a1a1a;letter-spacing:-0.988px;transform-origin:0 0;transform:rotate(-90deg)">Bookmarks</div>
<svg style="left:0px;top:2324px;" width="14" height="24" viewBox="0 0 14 24"><path d="M-6 0H12.5V22L3 14.5L-6 22Z" fill="#5e5e5e"/></svg>
</div>
<div style="left:1160px;top:2427px;width:144px;height:11px;background:#bdbdbd;"></div>
<div style="left:3739.5px;top:2416px;height:14px;line-height:14px;font-size:10.8px;color:#6a6a6a;font-family:'Liberation Sans','Noto Sans CJK SC',sans-serif;text-shadow:0 0 1px #fff">CSDN @帝燚</div>
<svg style="left:3626px;top:2434px;" width="18" height="4" viewBox="0 0 18 4"><circle cx="9" cy="9.3" r="8.6" fill="#68a568"/></svg>
<div style="left:51px;top:2436px;width:11px;height:3px;background:#5a5a5a;border-radius:2px 2px 0 0;opacity:.8"></div>
<div style="left:226px;top:2436px;width:6px;height:3px;background:#5a5a5a;border-radius:2px 2px 0 0;opacity:.8"></div>
<div style="left:343px;top:2436px;width:4px;height:3px;background:#5a5a5a;border-radius:2px 2px 0 0;opacity:.8"></div>
<div style="left:446px;top:2436px;width:12px;height:3px;background:#5a5a5a;border-radius:2px 2px 0 0;opacity:.8"></div>
<div style="left:518px;top:2436px;width:4px;height:3px;background:#5a5a5a;border-radius:2px 2px 0 0;opacity:.8"></div>
</div></body></html>
